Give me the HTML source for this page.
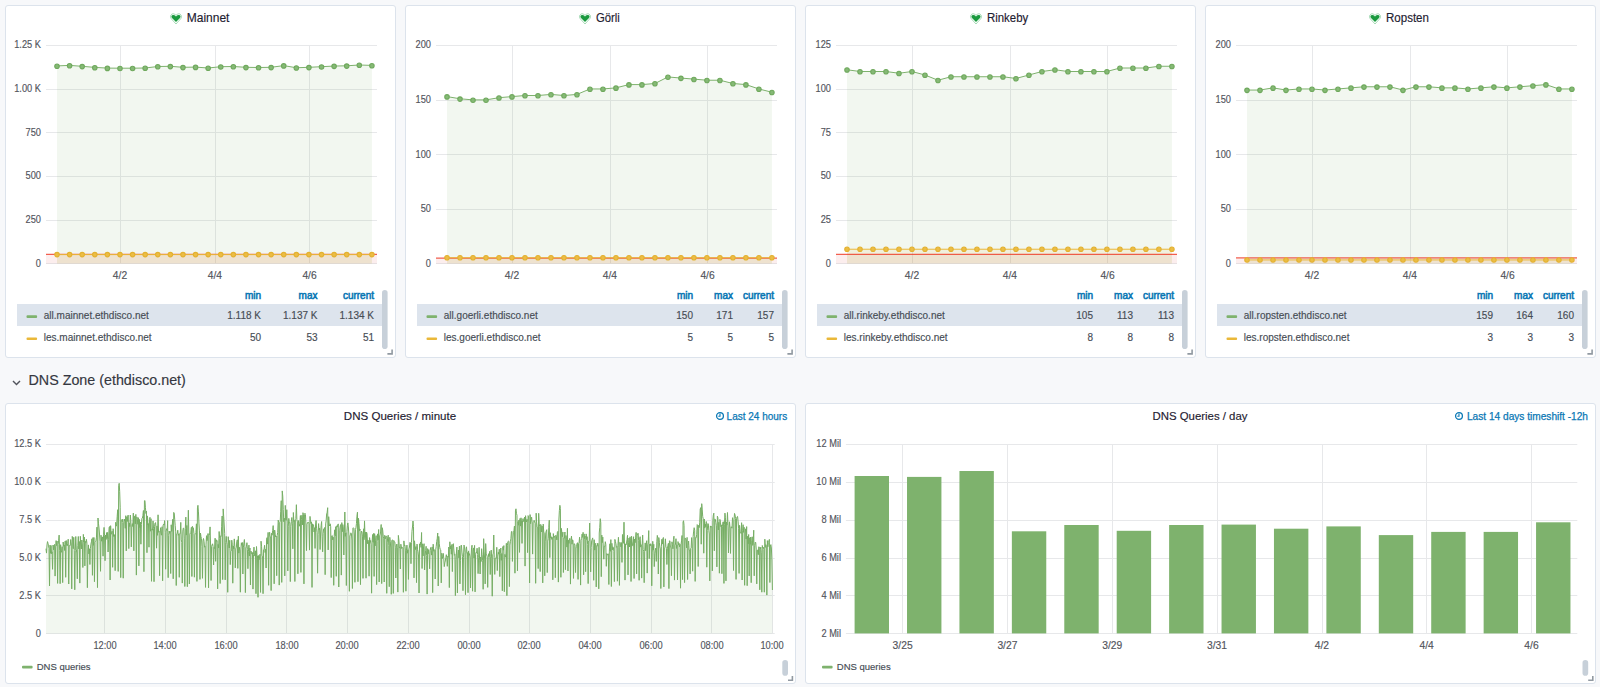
<!DOCTYPE html><html><head><meta charset="utf-8"><title>Grafana - ethdisco</title><style>
html,body{margin:0;padding:0;background:#f7f8fa;width:1600px;height:687px;overflow:hidden;font-family:"Liberation Sans", sans-serif;}
.abs{position:absolute;}
.t{position:absolute;white-space:nowrap;line-height:1;-webkit-text-stroke:0.15px currentColor;}
.panel{position:absolute;background:#fff;border:1px solid #dce3ec;border-radius:3px;box-sizing:border-box;}
svg{overflow:visible}

</style></head><body>
<div class="panel" style="left:5px;top:5px;width:391px;height:353px"></div>
<svg class="abs" style="left:168.75px;top:12.90px" width="14" height="12" viewBox="0 0 14 12">
<path d="M7 11.0 L2.3 5.8 C1.1 4.4 1.3 2.0 2.9 1.1 C4.3 0.4 5.8 1.0 7 2.3 C8.2 1.0 9.7 0.4 11.1 1.1 C12.7 2.0 12.9 4.4 11.7 5.8 Z" fill="none" stroke="rgba(40,165,80,0.45)" stroke-width="0.9"/>
<path d="M7 9.0 L3.0 5.0 C2.1 4.1 2.2 2.7 3.3 2.2 C4.4 1.7 5.8 2.1 7 3.4 C8.2 2.1 9.6 1.7 10.7 2.2 C11.8 2.7 11.9 4.1 11.0 5.0 Z" fill="#1a9a3e"/>
</svg>
<div class="t" style="left:186.75px;top:12.00px;font-size:12px;color:#1e2030;font-weight:normal;transform:scaleX(1.0);transform-origin:left center;">Mainnet</div>
<svg class="abs" style="left:0;top:0" width="1600" height="400">
<line x1="46" y1="45.50" x2="377" y2="45.50" stroke="#e7e8ea" stroke-width="1"/>
<line x1="46" y1="89.50" x2="377" y2="89.50" stroke="#e7e8ea" stroke-width="1"/>
<line x1="46" y1="132.50" x2="377" y2="132.50" stroke="#e7e8ea" stroke-width="1"/>
<line x1="46" y1="176.50" x2="377" y2="176.50" stroke="#e7e8ea" stroke-width="1"/>
<line x1="46" y1="220.50" x2="377" y2="220.50" stroke="#e7e8ea" stroke-width="1"/>
<line x1="46" y1="263.50" x2="377" y2="263.50" stroke="#e7e8ea" stroke-width="1"/>
<line x1="120.50" y1="45.3" x2="120.50" y2="263.6" stroke="#e7e8ea" stroke-width="1"/>
<line x1="215.50" y1="45.3" x2="215.50" y2="263.6" stroke="#e7e8ea" stroke-width="1"/>
<line x1="309.50" y1="45.3" x2="309.50" y2="263.6" stroke="#e7e8ea" stroke-width="1"/>
<rect x="46" y="254.30" width="331" height="9.30" fill="rgba(234,112,112,0.12)"/>
<polygon points="57.00,263.6 57.00,65.90 69.60,65.40 82.19,66.30 94.79,67.40 107.38,68.10 119.98,68.20 132.58,68.20 145.17,68.00 157.77,66.50 170.36,66.30 182.96,67.30 195.56,67.10 208.15,68.00 220.75,66.70 233.34,66.50 245.94,67.30 258.54,67.50 271.13,67.30 283.73,65.60 296.32,67.75 308.92,67.30 321.52,66.70 334.11,66.05 346.71,65.80 359.30,65.00 371.90,65.40 371.90,263.6" fill="rgba(126,178,109,0.1)"/>
<polygon points="57.00,263.6 57.00,254.60 371.90,254.60 371.90,263.6" fill="rgba(234,184,57,0.1)"/>
<line x1="46" y1="254.30" x2="377" y2="254.30" stroke="rgba(237,46,24,0.75)" stroke-width="1.2"/>
<polyline points="57.00,65.90 69.60,65.40 82.19,66.30 94.79,67.40 107.38,68.10 119.98,68.20 132.58,68.20 145.17,68.00 157.77,66.50 170.36,66.30 182.96,67.30 195.56,67.10 208.15,68.00 220.75,66.70 233.34,66.50 245.94,67.30 258.54,67.50 271.13,67.30 283.73,65.60 296.32,67.75 308.92,67.30 321.52,66.70 334.11,66.05 346.71,65.80 359.30,65.00 371.90,65.40" fill="none" stroke="#7eb26d" stroke-width="1"/>
<circle cx="57.00" cy="66.20" r="2.25" fill="#86b976" stroke="#6fa95d" stroke-width="1.1"/>
<circle cx="69.60" cy="65.70" r="2.25" fill="#86b976" stroke="#6fa95d" stroke-width="1.1"/>
<circle cx="82.19" cy="66.60" r="2.25" fill="#86b976" stroke="#6fa95d" stroke-width="1.1"/>
<circle cx="94.79" cy="67.70" r="2.25" fill="#86b976" stroke="#6fa95d" stroke-width="1.1"/>
<circle cx="107.38" cy="68.40" r="2.25" fill="#86b976" stroke="#6fa95d" stroke-width="1.1"/>
<circle cx="119.98" cy="68.50" r="2.25" fill="#86b976" stroke="#6fa95d" stroke-width="1.1"/>
<circle cx="132.58" cy="68.50" r="2.25" fill="#86b976" stroke="#6fa95d" stroke-width="1.1"/>
<circle cx="145.17" cy="68.30" r="2.25" fill="#86b976" stroke="#6fa95d" stroke-width="1.1"/>
<circle cx="157.77" cy="66.80" r="2.25" fill="#86b976" stroke="#6fa95d" stroke-width="1.1"/>
<circle cx="170.36" cy="66.60" r="2.25" fill="#86b976" stroke="#6fa95d" stroke-width="1.1"/>
<circle cx="182.96" cy="67.60" r="2.25" fill="#86b976" stroke="#6fa95d" stroke-width="1.1"/>
<circle cx="195.56" cy="67.40" r="2.25" fill="#86b976" stroke="#6fa95d" stroke-width="1.1"/>
<circle cx="208.15" cy="68.30" r="2.25" fill="#86b976" stroke="#6fa95d" stroke-width="1.1"/>
<circle cx="220.75" cy="67.00" r="2.25" fill="#86b976" stroke="#6fa95d" stroke-width="1.1"/>
<circle cx="233.34" cy="66.80" r="2.25" fill="#86b976" stroke="#6fa95d" stroke-width="1.1"/>
<circle cx="245.94" cy="67.60" r="2.25" fill="#86b976" stroke="#6fa95d" stroke-width="1.1"/>
<circle cx="258.54" cy="67.80" r="2.25" fill="#86b976" stroke="#6fa95d" stroke-width="1.1"/>
<circle cx="271.13" cy="67.60" r="2.25" fill="#86b976" stroke="#6fa95d" stroke-width="1.1"/>
<circle cx="283.73" cy="65.90" r="2.25" fill="#86b976" stroke="#6fa95d" stroke-width="1.1"/>
<circle cx="296.32" cy="68.05" r="2.25" fill="#86b976" stroke="#6fa95d" stroke-width="1.1"/>
<circle cx="308.92" cy="67.60" r="2.25" fill="#86b976" stroke="#6fa95d" stroke-width="1.1"/>
<circle cx="321.52" cy="67.00" r="2.25" fill="#86b976" stroke="#6fa95d" stroke-width="1.1"/>
<circle cx="334.11" cy="66.35" r="2.25" fill="#86b976" stroke="#6fa95d" stroke-width="1.1"/>
<circle cx="346.71" cy="66.10" r="2.25" fill="#86b976" stroke="#6fa95d" stroke-width="1.1"/>
<circle cx="359.30" cy="65.30" r="2.25" fill="#86b976" stroke="#6fa95d" stroke-width="1.1"/>
<circle cx="371.90" cy="65.70" r="2.25" fill="#86b976" stroke="#6fa95d" stroke-width="1.1"/>
<line x1="57.00" y1="254.60" x2="371.90" y2="254.60" stroke="#eab839" stroke-width="1"/>
<circle cx="57.00" cy="254.60" r="2.25" fill="#ecbd45" stroke="#e3b130" stroke-width="1.1"/>
<circle cx="69.60" cy="254.60" r="2.25" fill="#ecbd45" stroke="#e3b130" stroke-width="1.1"/>
<circle cx="82.19" cy="254.60" r="2.25" fill="#ecbd45" stroke="#e3b130" stroke-width="1.1"/>
<circle cx="94.79" cy="254.60" r="2.25" fill="#ecbd45" stroke="#e3b130" stroke-width="1.1"/>
<circle cx="107.38" cy="254.60" r="2.25" fill="#ecbd45" stroke="#e3b130" stroke-width="1.1"/>
<circle cx="119.98" cy="254.60" r="2.25" fill="#ecbd45" stroke="#e3b130" stroke-width="1.1"/>
<circle cx="132.58" cy="254.60" r="2.25" fill="#ecbd45" stroke="#e3b130" stroke-width="1.1"/>
<circle cx="145.17" cy="254.60" r="2.25" fill="#ecbd45" stroke="#e3b130" stroke-width="1.1"/>
<circle cx="157.77" cy="254.60" r="2.25" fill="#ecbd45" stroke="#e3b130" stroke-width="1.1"/>
<circle cx="170.36" cy="254.60" r="2.25" fill="#ecbd45" stroke="#e3b130" stroke-width="1.1"/>
<circle cx="182.96" cy="254.60" r="2.25" fill="#ecbd45" stroke="#e3b130" stroke-width="1.1"/>
<circle cx="195.56" cy="254.60" r="2.25" fill="#ecbd45" stroke="#e3b130" stroke-width="1.1"/>
<circle cx="208.15" cy="254.60" r="2.25" fill="#ecbd45" stroke="#e3b130" stroke-width="1.1"/>
<circle cx="220.75" cy="254.60" r="2.25" fill="#ecbd45" stroke="#e3b130" stroke-width="1.1"/>
<circle cx="233.34" cy="254.60" r="2.25" fill="#ecbd45" stroke="#e3b130" stroke-width="1.1"/>
<circle cx="245.94" cy="254.60" r="2.25" fill="#ecbd45" stroke="#e3b130" stroke-width="1.1"/>
<circle cx="258.54" cy="254.60" r="2.25" fill="#ecbd45" stroke="#e3b130" stroke-width="1.1"/>
<circle cx="271.13" cy="254.60" r="2.25" fill="#ecbd45" stroke="#e3b130" stroke-width="1.1"/>
<circle cx="283.73" cy="254.60" r="2.25" fill="#ecbd45" stroke="#e3b130" stroke-width="1.1"/>
<circle cx="296.32" cy="254.60" r="2.25" fill="#ecbd45" stroke="#e3b130" stroke-width="1.1"/>
<circle cx="308.92" cy="254.60" r="2.25" fill="#ecbd45" stroke="#e3b130" stroke-width="1.1"/>
<circle cx="321.52" cy="254.60" r="2.25" fill="#ecbd45" stroke="#e3b130" stroke-width="1.1"/>
<circle cx="334.11" cy="254.60" r="2.25" fill="#ecbd45" stroke="#e3b130" stroke-width="1.1"/>
<circle cx="346.71" cy="254.60" r="2.25" fill="#ecbd45" stroke="#e3b130" stroke-width="1.1"/>
<circle cx="359.30" cy="254.60" r="2.25" fill="#ecbd45" stroke="#e3b130" stroke-width="1.1"/>
<circle cx="371.90" cy="254.60" r="2.25" fill="#ecbd45" stroke="#e3b130" stroke-width="1.1"/>
<rect x="17" y="304" width="365" height="22" fill="#dde4ed"/>
<rect x="382" y="290" width="5.6" height="59" rx="2.8" fill="#c7d0d9"/>
<path d="M387.4 353.9 H392.1 V349.6" fill="none" stroke="#9199a1" stroke-width="1.6"/>
<rect x="26.5" y="315.2" width="10.6" height="2.7" rx="1" fill="#7eb26d"/>
<rect x="26.5" y="337.4" width="10.6" height="2.7" rx="1" fill="#eab839"/>
</svg>
<div class="t" style="left:-959.00px;width:1000px;text-align:right;top:40.00px;font-size:10.3px;color:#52545c;font-weight:normal;transform:scaleX(0.9);transform-origin:right center;">1.25 K</div>
<div class="t" style="left:-959.00px;width:1000px;text-align:right;top:84.00px;font-size:10.3px;color:#52545c;font-weight:normal;transform:scaleX(0.9);transform-origin:right center;">1.00 K</div>
<div class="t" style="left:-959.00px;width:1000px;text-align:right;top:128.00px;font-size:10.3px;color:#52545c;font-weight:normal;transform:scaleX(0.9);transform-origin:right center;">750</div>
<div class="t" style="left:-959.00px;width:1000px;text-align:right;top:171.00px;font-size:10.3px;color:#52545c;font-weight:normal;transform:scaleX(0.9);transform-origin:right center;">500</div>
<div class="t" style="left:-959.00px;width:1000px;text-align:right;top:215.00px;font-size:10.3px;color:#52545c;font-weight:normal;transform:scaleX(0.9);transform-origin:right center;">250</div>
<div class="t" style="left:-959.00px;width:1000px;text-align:right;top:259.00px;font-size:10.3px;color:#52545c;font-weight:normal;transform:scaleX(0.9);transform-origin:right center;">0</div>
<div class="t" style="left:-380.02px;width:1000px;text-align:center;top:271.00px;font-size:10.3px;color:#52545c;font-weight:normal;">4/2</div>
<div class="t" style="left:-285.17px;width:1000px;text-align:center;top:271.00px;font-size:10.3px;color:#52545c;font-weight:normal;">4/4</div>
<div class="t" style="left:-190.45px;width:1000px;text-align:center;top:271.00px;font-size:10.3px;color:#52545c;font-weight:normal;">4/6</div>
<div class="t" style="left:-739.00px;width:1000px;text-align:right;top:291.00px;font-size:10px;color:#0a78b5;font-weight:normal;-webkit-text-stroke:0.55px #0a78b5;">min</div>
<div class="t" style="left:-682.50px;width:1000px;text-align:right;top:291.00px;font-size:10px;color:#0a78b5;font-weight:normal;-webkit-text-stroke:0.55px #0a78b5;">max</div>
<div class="t" style="left:-626.00px;width:1000px;text-align:right;top:291.00px;font-size:10px;color:#0a78b5;font-weight:normal;-webkit-text-stroke:0.55px #0a78b5;">current</div>
<div class="t" style="left:43.80px;top:311.00px;font-size:10px;color:#464c54;font-weight:normal;">all.mainnet.ethdisco.net</div>
<div class="t" style="left:-739.00px;width:1000px;text-align:right;top:311.00px;font-size:10px;color:#464c54;font-weight:normal;">1.118 K</div>
<div class="t" style="left:-682.50px;width:1000px;text-align:right;top:311.00px;font-size:10px;color:#464c54;font-weight:normal;">1.137 K</div>
<div class="t" style="left:-626.00px;width:1000px;text-align:right;top:311.00px;font-size:10px;color:#464c54;font-weight:normal;">1.134 K</div>
<div class="t" style="left:43.80px;top:333.00px;font-size:10px;color:#464c54;font-weight:normal;">les.mainnet.ethdisco.net</div>
<div class="t" style="left:-739.00px;width:1000px;text-align:right;top:333.00px;font-size:10px;color:#464c54;font-weight:normal;">50</div>
<div class="t" style="left:-682.50px;width:1000px;text-align:right;top:333.00px;font-size:10px;color:#464c54;font-weight:normal;">53</div>
<div class="t" style="left:-626.00px;width:1000px;text-align:right;top:333.00px;font-size:10px;color:#464c54;font-weight:normal;">51</div>
<div class="panel" style="left:405px;top:5px;width:391px;height:353px"></div>
<svg class="abs" style="left:577.90px;top:12.90px" width="14" height="12" viewBox="0 0 14 12">
<path d="M7 11.0 L2.3 5.8 C1.1 4.4 1.3 2.0 2.9 1.1 C4.3 0.4 5.8 1.0 7 2.3 C8.2 1.0 9.7 0.4 11.1 1.1 C12.7 2.0 12.9 4.4 11.7 5.8 Z" fill="none" stroke="rgba(40,165,80,0.45)" stroke-width="0.9"/>
<path d="M7 9.0 L3.0 5.0 C2.1 4.1 2.2 2.7 3.3 2.2 C4.4 1.7 5.8 2.1 7 3.4 C8.2 2.1 9.6 1.7 10.7 2.2 C11.8 2.7 11.9 4.1 11.0 5.0 Z" fill="#1a9a3e"/>
</svg>
<div class="t" style="left:595.90px;top:12.00px;font-size:12px;color:#1e2030;font-weight:normal;transform:scaleX(0.94);transform-origin:left center;">G&ouml;rli</div>
<svg class="abs" style="left:0;top:0" width="1600" height="400">
<line x1="436" y1="45.50" x2="777" y2="45.50" stroke="#e7e8ea" stroke-width="1"/>
<line x1="436" y1="100.50" x2="777" y2="100.50" stroke="#e7e8ea" stroke-width="1"/>
<line x1="436" y1="154.50" x2="777" y2="154.50" stroke="#e7e8ea" stroke-width="1"/>
<line x1="436" y1="209.50" x2="777" y2="209.50" stroke="#e7e8ea" stroke-width="1"/>
<line x1="436" y1="263.50" x2="777" y2="263.50" stroke="#e7e8ea" stroke-width="1"/>
<line x1="512.50" y1="45.3" x2="512.50" y2="263.6" stroke="#e7e8ea" stroke-width="1"/>
<line x1="610.50" y1="45.3" x2="610.50" y2="263.6" stroke="#e7e8ea" stroke-width="1"/>
<line x1="707.50" y1="45.3" x2="707.50" y2="263.6" stroke="#e7e8ea" stroke-width="1"/>
<rect x="436" y="258.10" width="341" height="5.50" fill="rgba(234,112,112,0.12)"/>
<polygon points="447.00,263.6 447.00,96.60 460.00,98.78 472.99,99.88 485.99,99.88 498.98,97.69 511.98,96.60 524.98,95.51 537.97,95.51 550.97,94.42 563.96,95.51 576.96,94.42 589.96,88.96 602.95,88.96 615.95,87.87 628.94,84.59 641.94,84.59 654.94,83.50 667.93,76.95 680.93,78.05 693.92,79.14 706.92,80.23 719.92,80.23 732.91,83.50 745.91,84.59 758.90,88.96 771.90,92.23 771.90,263.6" fill="rgba(126,178,109,0.1)"/>
<polygon points="447.00,263.6 447.00,257.74 771.90,257.74 771.90,263.6" fill="rgba(234,184,57,0.1)"/>
<line x1="436" y1="258.10" x2="777" y2="258.10" stroke="rgba(237,46,24,0.75)" stroke-width="1.2"/>
<polyline points="447.00,96.60 460.00,98.78 472.99,99.88 485.99,99.88 498.98,97.69 511.98,96.60 524.98,95.51 537.97,95.51 550.97,94.42 563.96,95.51 576.96,94.42 589.96,88.96 602.95,88.96 615.95,87.87 628.94,84.59 641.94,84.59 654.94,83.50 667.93,76.95 680.93,78.05 693.92,79.14 706.92,80.23 719.92,80.23 732.91,83.50 745.91,84.59 758.90,88.96 771.90,92.23" fill="none" stroke="#7eb26d" stroke-width="1"/>
<circle cx="447.00" cy="96.90" r="2.25" fill="#86b976" stroke="#6fa95d" stroke-width="1.1"/>
<circle cx="460.00" cy="99.08" r="2.25" fill="#86b976" stroke="#6fa95d" stroke-width="1.1"/>
<circle cx="472.99" cy="100.18" r="2.25" fill="#86b976" stroke="#6fa95d" stroke-width="1.1"/>
<circle cx="485.99" cy="100.18" r="2.25" fill="#86b976" stroke="#6fa95d" stroke-width="1.1"/>
<circle cx="498.98" cy="97.99" r="2.25" fill="#86b976" stroke="#6fa95d" stroke-width="1.1"/>
<circle cx="511.98" cy="96.90" r="2.25" fill="#86b976" stroke="#6fa95d" stroke-width="1.1"/>
<circle cx="524.98" cy="95.81" r="2.25" fill="#86b976" stroke="#6fa95d" stroke-width="1.1"/>
<circle cx="537.97" cy="95.81" r="2.25" fill="#86b976" stroke="#6fa95d" stroke-width="1.1"/>
<circle cx="550.97" cy="94.72" r="2.25" fill="#86b976" stroke="#6fa95d" stroke-width="1.1"/>
<circle cx="563.96" cy="95.81" r="2.25" fill="#86b976" stroke="#6fa95d" stroke-width="1.1"/>
<circle cx="576.96" cy="94.72" r="2.25" fill="#86b976" stroke="#6fa95d" stroke-width="1.1"/>
<circle cx="589.96" cy="89.26" r="2.25" fill="#86b976" stroke="#6fa95d" stroke-width="1.1"/>
<circle cx="602.95" cy="89.26" r="2.25" fill="#86b976" stroke="#6fa95d" stroke-width="1.1"/>
<circle cx="615.95" cy="88.17" r="2.25" fill="#86b976" stroke="#6fa95d" stroke-width="1.1"/>
<circle cx="628.94" cy="84.89" r="2.25" fill="#86b976" stroke="#6fa95d" stroke-width="1.1"/>
<circle cx="641.94" cy="84.89" r="2.25" fill="#86b976" stroke="#6fa95d" stroke-width="1.1"/>
<circle cx="654.94" cy="83.80" r="2.25" fill="#86b976" stroke="#6fa95d" stroke-width="1.1"/>
<circle cx="667.93" cy="77.25" r="2.25" fill="#86b976" stroke="#6fa95d" stroke-width="1.1"/>
<circle cx="680.93" cy="78.35" r="2.25" fill="#86b976" stroke="#6fa95d" stroke-width="1.1"/>
<circle cx="693.92" cy="79.44" r="2.25" fill="#86b976" stroke="#6fa95d" stroke-width="1.1"/>
<circle cx="706.92" cy="80.53" r="2.25" fill="#86b976" stroke="#6fa95d" stroke-width="1.1"/>
<circle cx="719.92" cy="80.53" r="2.25" fill="#86b976" stroke="#6fa95d" stroke-width="1.1"/>
<circle cx="732.91" cy="83.80" r="2.25" fill="#86b976" stroke="#6fa95d" stroke-width="1.1"/>
<circle cx="745.91" cy="84.89" r="2.25" fill="#86b976" stroke="#6fa95d" stroke-width="1.1"/>
<circle cx="758.90" cy="89.26" r="2.25" fill="#86b976" stroke="#6fa95d" stroke-width="1.1"/>
<circle cx="771.90" cy="92.53" r="2.25" fill="#86b976" stroke="#6fa95d" stroke-width="1.1"/>
<line x1="447.00" y1="257.74" x2="771.90" y2="257.74" stroke="#eab839" stroke-width="1"/>
<circle cx="447.00" cy="257.74" r="2.25" fill="#ecbd45" stroke="#e3b130" stroke-width="1.1"/>
<circle cx="460.00" cy="257.74" r="2.25" fill="#ecbd45" stroke="#e3b130" stroke-width="1.1"/>
<circle cx="472.99" cy="257.74" r="2.25" fill="#ecbd45" stroke="#e3b130" stroke-width="1.1"/>
<circle cx="485.99" cy="257.74" r="2.25" fill="#ecbd45" stroke="#e3b130" stroke-width="1.1"/>
<circle cx="498.98" cy="257.74" r="2.25" fill="#ecbd45" stroke="#e3b130" stroke-width="1.1"/>
<circle cx="511.98" cy="257.74" r="2.25" fill="#ecbd45" stroke="#e3b130" stroke-width="1.1"/>
<circle cx="524.98" cy="257.74" r="2.25" fill="#ecbd45" stroke="#e3b130" stroke-width="1.1"/>
<circle cx="537.97" cy="257.74" r="2.25" fill="#ecbd45" stroke="#e3b130" stroke-width="1.1"/>
<circle cx="550.97" cy="257.74" r="2.25" fill="#ecbd45" stroke="#e3b130" stroke-width="1.1"/>
<circle cx="563.96" cy="257.74" r="2.25" fill="#ecbd45" stroke="#e3b130" stroke-width="1.1"/>
<circle cx="576.96" cy="257.74" r="2.25" fill="#ecbd45" stroke="#e3b130" stroke-width="1.1"/>
<circle cx="589.96" cy="257.74" r="2.25" fill="#ecbd45" stroke="#e3b130" stroke-width="1.1"/>
<circle cx="602.95" cy="257.74" r="2.25" fill="#ecbd45" stroke="#e3b130" stroke-width="1.1"/>
<circle cx="615.95" cy="257.74" r="2.25" fill="#ecbd45" stroke="#e3b130" stroke-width="1.1"/>
<circle cx="628.94" cy="257.74" r="2.25" fill="#ecbd45" stroke="#e3b130" stroke-width="1.1"/>
<circle cx="641.94" cy="257.74" r="2.25" fill="#ecbd45" stroke="#e3b130" stroke-width="1.1"/>
<circle cx="654.94" cy="257.74" r="2.25" fill="#ecbd45" stroke="#e3b130" stroke-width="1.1"/>
<circle cx="667.93" cy="257.74" r="2.25" fill="#ecbd45" stroke="#e3b130" stroke-width="1.1"/>
<circle cx="680.93" cy="257.74" r="2.25" fill="#ecbd45" stroke="#e3b130" stroke-width="1.1"/>
<circle cx="693.92" cy="257.74" r="2.25" fill="#ecbd45" stroke="#e3b130" stroke-width="1.1"/>
<circle cx="706.92" cy="257.74" r="2.25" fill="#ecbd45" stroke="#e3b130" stroke-width="1.1"/>
<circle cx="719.92" cy="257.74" r="2.25" fill="#ecbd45" stroke="#e3b130" stroke-width="1.1"/>
<circle cx="732.91" cy="257.74" r="2.25" fill="#ecbd45" stroke="#e3b130" stroke-width="1.1"/>
<circle cx="745.91" cy="257.74" r="2.25" fill="#ecbd45" stroke="#e3b130" stroke-width="1.1"/>
<circle cx="758.90" cy="257.74" r="2.25" fill="#ecbd45" stroke="#e3b130" stroke-width="1.1"/>
<circle cx="771.90" cy="257.74" r="2.25" fill="#ecbd45" stroke="#e3b130" stroke-width="1.1"/>
<rect x="417" y="304" width="365" height="22" fill="#dde4ed"/>
<rect x="782" y="290" width="5.6" height="59" rx="2.8" fill="#c7d0d9"/>
<path d="M787.4 353.9 H792.1 V349.6" fill="none" stroke="#9199a1" stroke-width="1.6"/>
<rect x="426.5" y="315.2" width="10.6" height="2.7" rx="1" fill="#7eb26d"/>
<rect x="426.5" y="337.4" width="10.6" height="2.7" rx="1" fill="#eab839"/>
</svg>
<div class="t" style="left:-569.00px;width:1000px;text-align:right;top:40.00px;font-size:10.3px;color:#52545c;font-weight:normal;transform:scaleX(0.9);transform-origin:right center;">200</div>
<div class="t" style="left:-569.00px;width:1000px;text-align:right;top:95.00px;font-size:10.3px;color:#52545c;font-weight:normal;transform:scaleX(0.9);transform-origin:right center;">150</div>
<div class="t" style="left:-569.00px;width:1000px;text-align:right;top:150.00px;font-size:10.3px;color:#52545c;font-weight:normal;transform:scaleX(0.9);transform-origin:right center;">100</div>
<div class="t" style="left:-569.00px;width:1000px;text-align:right;top:204.00px;font-size:10.3px;color:#52545c;font-weight:normal;transform:scaleX(0.9);transform-origin:right center;">50</div>
<div class="t" style="left:-569.00px;width:1000px;text-align:right;top:259.00px;font-size:10.3px;color:#52545c;font-weight:normal;transform:scaleX(0.9);transform-origin:right center;">0</div>
<div class="t" style="left:11.98px;width:1000px;text-align:center;top:271.00px;font-size:10.3px;color:#52545c;font-weight:normal;">4/2</div>
<div class="t" style="left:109.84px;width:1000px;text-align:center;top:271.00px;font-size:10.3px;color:#52545c;font-weight:normal;">4/4</div>
<div class="t" style="left:207.57px;width:1000px;text-align:center;top:271.00px;font-size:10.3px;color:#52545c;font-weight:normal;">4/6</div>
<div class="t" style="left:-307.00px;width:1000px;text-align:right;top:291.00px;font-size:10px;color:#0a78b5;font-weight:normal;-webkit-text-stroke:0.55px #0a78b5;">min</div>
<div class="t" style="left:-267.00px;width:1000px;text-align:right;top:291.00px;font-size:10px;color:#0a78b5;font-weight:normal;-webkit-text-stroke:0.55px #0a78b5;">max</div>
<div class="t" style="left:-226.00px;width:1000px;text-align:right;top:291.00px;font-size:10px;color:#0a78b5;font-weight:normal;-webkit-text-stroke:0.55px #0a78b5;">current</div>
<div class="t" style="left:443.80px;top:311.00px;font-size:10px;color:#464c54;font-weight:normal;">all.goerli.ethdisco.net</div>
<div class="t" style="left:-307.00px;width:1000px;text-align:right;top:311.00px;font-size:10px;color:#464c54;font-weight:normal;">150</div>
<div class="t" style="left:-267.00px;width:1000px;text-align:right;top:311.00px;font-size:10px;color:#464c54;font-weight:normal;">171</div>
<div class="t" style="left:-226.00px;width:1000px;text-align:right;top:311.00px;font-size:10px;color:#464c54;font-weight:normal;">157</div>
<div class="t" style="left:443.80px;top:333.00px;font-size:10px;color:#464c54;font-weight:normal;">les.goerli.ethdisco.net</div>
<div class="t" style="left:-307.00px;width:1000px;text-align:right;top:333.00px;font-size:10px;color:#464c54;font-weight:normal;">5</div>
<div class="t" style="left:-267.00px;width:1000px;text-align:right;top:333.00px;font-size:10px;color:#464c54;font-weight:normal;">5</div>
<div class="t" style="left:-226.00px;width:1000px;text-align:right;top:333.00px;font-size:10px;color:#464c54;font-weight:normal;">5</div>
<div class="panel" style="left:805px;top:5px;width:391px;height:353px"></div>
<svg class="abs" style="left:969.05px;top:12.90px" width="14" height="12" viewBox="0 0 14 12">
<path d="M7 11.0 L2.3 5.8 C1.1 4.4 1.3 2.0 2.9 1.1 C4.3 0.4 5.8 1.0 7 2.3 C8.2 1.0 9.7 0.4 11.1 1.1 C12.7 2.0 12.9 4.4 11.7 5.8 Z" fill="none" stroke="rgba(40,165,80,0.45)" stroke-width="0.9"/>
<path d="M7 9.0 L3.0 5.0 C2.1 4.1 2.2 2.7 3.3 2.2 C4.4 1.7 5.8 2.1 7 3.4 C8.2 2.1 9.6 1.7 10.7 2.2 C11.8 2.7 11.9 4.1 11.0 5.0 Z" fill="#1a9a3e"/>
</svg>
<div class="t" style="left:987.05px;top:12.00px;font-size:12px;color:#1e2030;font-weight:normal;transform:scaleX(0.95);transform-origin:left center;">Rinkeby</div>
<svg class="abs" style="left:0;top:0" width="1600" height="400">
<line x1="836" y1="45.50" x2="1177" y2="45.50" stroke="#e7e8ea" stroke-width="1"/>
<line x1="836" y1="89.50" x2="1177" y2="89.50" stroke="#e7e8ea" stroke-width="1"/>
<line x1="836" y1="132.50" x2="1177" y2="132.50" stroke="#e7e8ea" stroke-width="1"/>
<line x1="836" y1="176.50" x2="1177" y2="176.50" stroke="#e7e8ea" stroke-width="1"/>
<line x1="836" y1="220.50" x2="1177" y2="220.50" stroke="#e7e8ea" stroke-width="1"/>
<line x1="836" y1="263.50" x2="1177" y2="263.50" stroke="#e7e8ea" stroke-width="1"/>
<line x1="912.50" y1="45.3" x2="912.50" y2="263.6" stroke="#e7e8ea" stroke-width="1"/>
<line x1="1010.50" y1="45.3" x2="1010.50" y2="263.6" stroke="#e7e8ea" stroke-width="1"/>
<line x1="1107.50" y1="45.3" x2="1107.50" y2="263.6" stroke="#e7e8ea" stroke-width="1"/>
<rect x="836" y="254.30" width="341" height="9.30" fill="rgba(234,112,112,0.12)"/>
<polygon points="847.00,263.6 847.00,69.75 860.00,71.50 872.99,71.50 885.99,71.50 898.98,73.24 911.98,71.50 924.98,74.99 937.97,80.23 950.97,76.74 963.96,76.74 976.96,76.74 989.96,76.74 1002.95,76.74 1015.95,78.48 1028.94,74.99 1041.94,71.50 1054.94,69.75 1067.93,71.50 1080.93,71.50 1093.92,71.50 1106.92,71.50 1119.92,68.00 1132.91,68.00 1145.91,68.00 1158.90,66.26 1171.90,66.26 1171.90,263.6" fill="rgba(126,178,109,0.1)"/>
<polygon points="847.00,263.6 847.00,249.23 1171.90,249.23 1171.90,263.6" fill="rgba(234,184,57,0.1)"/>
<line x1="836" y1="254.30" x2="1177" y2="254.30" stroke="rgba(237,46,24,0.75)" stroke-width="1.2"/>
<polyline points="847.00,69.75 860.00,71.50 872.99,71.50 885.99,71.50 898.98,73.24 911.98,71.50 924.98,74.99 937.97,80.23 950.97,76.74 963.96,76.74 976.96,76.74 989.96,76.74 1002.95,76.74 1015.95,78.48 1028.94,74.99 1041.94,71.50 1054.94,69.75 1067.93,71.50 1080.93,71.50 1093.92,71.50 1106.92,71.50 1119.92,68.00 1132.91,68.00 1145.91,68.00 1158.90,66.26 1171.90,66.26" fill="none" stroke="#7eb26d" stroke-width="1"/>
<circle cx="847.00" cy="70.05" r="2.25" fill="#86b976" stroke="#6fa95d" stroke-width="1.1"/>
<circle cx="860.00" cy="71.80" r="2.25" fill="#86b976" stroke="#6fa95d" stroke-width="1.1"/>
<circle cx="872.99" cy="71.80" r="2.25" fill="#86b976" stroke="#6fa95d" stroke-width="1.1"/>
<circle cx="885.99" cy="71.80" r="2.25" fill="#86b976" stroke="#6fa95d" stroke-width="1.1"/>
<circle cx="898.98" cy="73.54" r="2.25" fill="#86b976" stroke="#6fa95d" stroke-width="1.1"/>
<circle cx="911.98" cy="71.80" r="2.25" fill="#86b976" stroke="#6fa95d" stroke-width="1.1"/>
<circle cx="924.98" cy="75.29" r="2.25" fill="#86b976" stroke="#6fa95d" stroke-width="1.1"/>
<circle cx="937.97" cy="80.53" r="2.25" fill="#86b976" stroke="#6fa95d" stroke-width="1.1"/>
<circle cx="950.97" cy="77.04" r="2.25" fill="#86b976" stroke="#6fa95d" stroke-width="1.1"/>
<circle cx="963.96" cy="77.04" r="2.25" fill="#86b976" stroke="#6fa95d" stroke-width="1.1"/>
<circle cx="976.96" cy="77.04" r="2.25" fill="#86b976" stroke="#6fa95d" stroke-width="1.1"/>
<circle cx="989.96" cy="77.04" r="2.25" fill="#86b976" stroke="#6fa95d" stroke-width="1.1"/>
<circle cx="1002.95" cy="77.04" r="2.25" fill="#86b976" stroke="#6fa95d" stroke-width="1.1"/>
<circle cx="1015.95" cy="78.78" r="2.25" fill="#86b976" stroke="#6fa95d" stroke-width="1.1"/>
<circle cx="1028.94" cy="75.29" r="2.25" fill="#86b976" stroke="#6fa95d" stroke-width="1.1"/>
<circle cx="1041.94" cy="71.80" r="2.25" fill="#86b976" stroke="#6fa95d" stroke-width="1.1"/>
<circle cx="1054.94" cy="70.05" r="2.25" fill="#86b976" stroke="#6fa95d" stroke-width="1.1"/>
<circle cx="1067.93" cy="71.80" r="2.25" fill="#86b976" stroke="#6fa95d" stroke-width="1.1"/>
<circle cx="1080.93" cy="71.80" r="2.25" fill="#86b976" stroke="#6fa95d" stroke-width="1.1"/>
<circle cx="1093.92" cy="71.80" r="2.25" fill="#86b976" stroke="#6fa95d" stroke-width="1.1"/>
<circle cx="1106.92" cy="71.80" r="2.25" fill="#86b976" stroke="#6fa95d" stroke-width="1.1"/>
<circle cx="1119.92" cy="68.30" r="2.25" fill="#86b976" stroke="#6fa95d" stroke-width="1.1"/>
<circle cx="1132.91" cy="68.30" r="2.25" fill="#86b976" stroke="#6fa95d" stroke-width="1.1"/>
<circle cx="1145.91" cy="68.30" r="2.25" fill="#86b976" stroke="#6fa95d" stroke-width="1.1"/>
<circle cx="1158.90" cy="66.56" r="2.25" fill="#86b976" stroke="#6fa95d" stroke-width="1.1"/>
<circle cx="1171.90" cy="66.56" r="2.25" fill="#86b976" stroke="#6fa95d" stroke-width="1.1"/>
<line x1="847.00" y1="249.23" x2="1171.90" y2="249.23" stroke="#eab839" stroke-width="1"/>
<circle cx="847.00" cy="249.23" r="2.25" fill="#ecbd45" stroke="#e3b130" stroke-width="1.1"/>
<circle cx="860.00" cy="249.23" r="2.25" fill="#ecbd45" stroke="#e3b130" stroke-width="1.1"/>
<circle cx="872.99" cy="249.23" r="2.25" fill="#ecbd45" stroke="#e3b130" stroke-width="1.1"/>
<circle cx="885.99" cy="249.23" r="2.25" fill="#ecbd45" stroke="#e3b130" stroke-width="1.1"/>
<circle cx="898.98" cy="249.23" r="2.25" fill="#ecbd45" stroke="#e3b130" stroke-width="1.1"/>
<circle cx="911.98" cy="249.23" r="2.25" fill="#ecbd45" stroke="#e3b130" stroke-width="1.1"/>
<circle cx="924.98" cy="249.23" r="2.25" fill="#ecbd45" stroke="#e3b130" stroke-width="1.1"/>
<circle cx="937.97" cy="249.23" r="2.25" fill="#ecbd45" stroke="#e3b130" stroke-width="1.1"/>
<circle cx="950.97" cy="249.23" r="2.25" fill="#ecbd45" stroke="#e3b130" stroke-width="1.1"/>
<circle cx="963.96" cy="249.23" r="2.25" fill="#ecbd45" stroke="#e3b130" stroke-width="1.1"/>
<circle cx="976.96" cy="249.23" r="2.25" fill="#ecbd45" stroke="#e3b130" stroke-width="1.1"/>
<circle cx="989.96" cy="249.23" r="2.25" fill="#ecbd45" stroke="#e3b130" stroke-width="1.1"/>
<circle cx="1002.95" cy="249.23" r="2.25" fill="#ecbd45" stroke="#e3b130" stroke-width="1.1"/>
<circle cx="1015.95" cy="249.23" r="2.25" fill="#ecbd45" stroke="#e3b130" stroke-width="1.1"/>
<circle cx="1028.94" cy="249.23" r="2.25" fill="#ecbd45" stroke="#e3b130" stroke-width="1.1"/>
<circle cx="1041.94" cy="249.23" r="2.25" fill="#ecbd45" stroke="#e3b130" stroke-width="1.1"/>
<circle cx="1054.94" cy="249.23" r="2.25" fill="#ecbd45" stroke="#e3b130" stroke-width="1.1"/>
<circle cx="1067.93" cy="249.23" r="2.25" fill="#ecbd45" stroke="#e3b130" stroke-width="1.1"/>
<circle cx="1080.93" cy="249.23" r="2.25" fill="#ecbd45" stroke="#e3b130" stroke-width="1.1"/>
<circle cx="1093.92" cy="249.23" r="2.25" fill="#ecbd45" stroke="#e3b130" stroke-width="1.1"/>
<circle cx="1106.92" cy="249.23" r="2.25" fill="#ecbd45" stroke="#e3b130" stroke-width="1.1"/>
<circle cx="1119.92" cy="249.23" r="2.25" fill="#ecbd45" stroke="#e3b130" stroke-width="1.1"/>
<circle cx="1132.91" cy="249.23" r="2.25" fill="#ecbd45" stroke="#e3b130" stroke-width="1.1"/>
<circle cx="1145.91" cy="249.23" r="2.25" fill="#ecbd45" stroke="#e3b130" stroke-width="1.1"/>
<circle cx="1158.90" cy="249.23" r="2.25" fill="#ecbd45" stroke="#e3b130" stroke-width="1.1"/>
<circle cx="1171.90" cy="249.23" r="2.25" fill="#ecbd45" stroke="#e3b130" stroke-width="1.1"/>
<rect x="817" y="304" width="365" height="22" fill="#dde4ed"/>
<rect x="1182" y="290" width="5.6" height="59" rx="2.8" fill="#c7d0d9"/>
<path d="M1187.4 353.9 H1192.1 V349.6" fill="none" stroke="#9199a1" stroke-width="1.6"/>
<rect x="826.5" y="315.2" width="10.6" height="2.7" rx="1" fill="#7eb26d"/>
<rect x="826.5" y="337.4" width="10.6" height="2.7" rx="1" fill="#eab839"/>
</svg>
<div class="t" style="left:-169.00px;width:1000px;text-align:right;top:40.00px;font-size:10.3px;color:#52545c;font-weight:normal;transform:scaleX(0.9);transform-origin:right center;">125</div>
<div class="t" style="left:-169.00px;width:1000px;text-align:right;top:84.00px;font-size:10.3px;color:#52545c;font-weight:normal;transform:scaleX(0.9);transform-origin:right center;">100</div>
<div class="t" style="left:-169.00px;width:1000px;text-align:right;top:128.00px;font-size:10.3px;color:#52545c;font-weight:normal;transform:scaleX(0.9);transform-origin:right center;">75</div>
<div class="t" style="left:-169.00px;width:1000px;text-align:right;top:171.00px;font-size:10.3px;color:#52545c;font-weight:normal;transform:scaleX(0.9);transform-origin:right center;">50</div>
<div class="t" style="left:-169.00px;width:1000px;text-align:right;top:215.00px;font-size:10.3px;color:#52545c;font-weight:normal;transform:scaleX(0.9);transform-origin:right center;">25</div>
<div class="t" style="left:-169.00px;width:1000px;text-align:right;top:259.00px;font-size:10.3px;color:#52545c;font-weight:normal;transform:scaleX(0.9);transform-origin:right center;">0</div>
<div class="t" style="left:411.98px;width:1000px;text-align:center;top:271.00px;font-size:10.3px;color:#52545c;font-weight:normal;">4/2</div>
<div class="t" style="left:509.84px;width:1000px;text-align:center;top:271.00px;font-size:10.3px;color:#52545c;font-weight:normal;">4/4</div>
<div class="t" style="left:607.57px;width:1000px;text-align:center;top:271.00px;font-size:10.3px;color:#52545c;font-weight:normal;">4/6</div>
<div class="t" style="left:93.00px;width:1000px;text-align:right;top:291.00px;font-size:10px;color:#0a78b5;font-weight:normal;-webkit-text-stroke:0.55px #0a78b5;">min</div>
<div class="t" style="left:133.00px;width:1000px;text-align:right;top:291.00px;font-size:10px;color:#0a78b5;font-weight:normal;-webkit-text-stroke:0.55px #0a78b5;">max</div>
<div class="t" style="left:174.00px;width:1000px;text-align:right;top:291.00px;font-size:10px;color:#0a78b5;font-weight:normal;-webkit-text-stroke:0.55px #0a78b5;">current</div>
<div class="t" style="left:843.80px;top:311.00px;font-size:10px;color:#464c54;font-weight:normal;">all.rinkeby.ethdisco.net</div>
<div class="t" style="left:93.00px;width:1000px;text-align:right;top:311.00px;font-size:10px;color:#464c54;font-weight:normal;">105</div>
<div class="t" style="left:133.00px;width:1000px;text-align:right;top:311.00px;font-size:10px;color:#464c54;font-weight:normal;">113</div>
<div class="t" style="left:174.00px;width:1000px;text-align:right;top:311.00px;font-size:10px;color:#464c54;font-weight:normal;">113</div>
<div class="t" style="left:843.80px;top:333.00px;font-size:10px;color:#464c54;font-weight:normal;">les.rinkeby.ethdisco.net</div>
<div class="t" style="left:93.00px;width:1000px;text-align:right;top:333.00px;font-size:10px;color:#464c54;font-weight:normal;">8</div>
<div class="t" style="left:133.00px;width:1000px;text-align:right;top:333.00px;font-size:10px;color:#464c54;font-weight:normal;">8</div>
<div class="t" style="left:174.00px;width:1000px;text-align:right;top:333.00px;font-size:10px;color:#464c54;font-weight:normal;">8</div>
<div class="panel" style="left:1205px;top:5px;width:391px;height:353px"></div>
<svg class="abs" style="left:1368.30px;top:12.90px" width="14" height="12" viewBox="0 0 14 12">
<path d="M7 11.0 L2.3 5.8 C1.1 4.4 1.3 2.0 2.9 1.1 C4.3 0.4 5.8 1.0 7 2.3 C8.2 1.0 9.7 0.4 11.1 1.1 C12.7 2.0 12.9 4.4 11.7 5.8 Z" fill="none" stroke="rgba(40,165,80,0.45)" stroke-width="0.9"/>
<path d="M7 9.0 L3.0 5.0 C2.1 4.1 2.2 2.7 3.3 2.2 C4.4 1.7 5.8 2.1 7 3.4 C8.2 2.1 9.6 1.7 10.7 2.2 C11.8 2.7 11.9 4.1 11.0 5.0 Z" fill="#1a9a3e"/>
</svg>
<div class="t" style="left:1386.30px;top:12.00px;font-size:12px;color:#1e2030;font-weight:normal;transform:scaleX(0.96);transform-origin:left center;">Ropsten</div>
<svg class="abs" style="left:0;top:0" width="1600" height="400">
<line x1="1236" y1="45.50" x2="1577" y2="45.50" stroke="#e7e8ea" stroke-width="1"/>
<line x1="1236" y1="100.50" x2="1577" y2="100.50" stroke="#e7e8ea" stroke-width="1"/>
<line x1="1236" y1="154.50" x2="1577" y2="154.50" stroke="#e7e8ea" stroke-width="1"/>
<line x1="1236" y1="209.50" x2="1577" y2="209.50" stroke="#e7e8ea" stroke-width="1"/>
<line x1="1236" y1="263.50" x2="1577" y2="263.50" stroke="#e7e8ea" stroke-width="1"/>
<line x1="1312.50" y1="45.3" x2="1312.50" y2="263.6" stroke="#e7e8ea" stroke-width="1"/>
<line x1="1410.50" y1="45.3" x2="1410.50" y2="263.6" stroke="#e7e8ea" stroke-width="1"/>
<line x1="1507.50" y1="45.3" x2="1507.50" y2="263.6" stroke="#e7e8ea" stroke-width="1"/>
<rect x="1236" y="257.90" width="341" height="5.70" fill="rgba(234,112,112,0.12)"/>
<polygon points="1247.00,263.6 1247.00,90.05 1260.00,90.05 1272.99,87.87 1285.99,90.05 1298.98,88.96 1311.98,88.96 1324.98,90.05 1337.97,88.96 1350.97,87.87 1363.96,86.78 1376.96,86.78 1389.96,86.78 1402.95,90.05 1415.95,86.78 1428.94,86.78 1441.94,87.87 1454.94,87.87 1467.93,88.96 1480.93,87.87 1493.92,86.78 1506.92,87.87 1519.92,86.78 1532.91,85.69 1545.91,84.59 1558.90,88.96 1571.90,88.96 1571.90,263.6" fill="rgba(126,178,109,0.1)"/>
<polygon points="1247.00,263.6 1247.00,259.93 1571.90,259.93 1571.90,263.6" fill="rgba(234,184,57,0.1)"/>
<line x1="1236" y1="257.90" x2="1577" y2="257.90" stroke="rgba(237,46,24,0.75)" stroke-width="1.2"/>
<polyline points="1247.00,90.05 1260.00,90.05 1272.99,87.87 1285.99,90.05 1298.98,88.96 1311.98,88.96 1324.98,90.05 1337.97,88.96 1350.97,87.87 1363.96,86.78 1376.96,86.78 1389.96,86.78 1402.95,90.05 1415.95,86.78 1428.94,86.78 1441.94,87.87 1454.94,87.87 1467.93,88.96 1480.93,87.87 1493.92,86.78 1506.92,87.87 1519.92,86.78 1532.91,85.69 1545.91,84.59 1558.90,88.96 1571.90,88.96" fill="none" stroke="#7eb26d" stroke-width="1"/>
<circle cx="1247.00" cy="90.35" r="2.25" fill="#86b976" stroke="#6fa95d" stroke-width="1.1"/>
<circle cx="1260.00" cy="90.35" r="2.25" fill="#86b976" stroke="#6fa95d" stroke-width="1.1"/>
<circle cx="1272.99" cy="88.17" r="2.25" fill="#86b976" stroke="#6fa95d" stroke-width="1.1"/>
<circle cx="1285.99" cy="90.35" r="2.25" fill="#86b976" stroke="#6fa95d" stroke-width="1.1"/>
<circle cx="1298.98" cy="89.26" r="2.25" fill="#86b976" stroke="#6fa95d" stroke-width="1.1"/>
<circle cx="1311.98" cy="89.26" r="2.25" fill="#86b976" stroke="#6fa95d" stroke-width="1.1"/>
<circle cx="1324.98" cy="90.35" r="2.25" fill="#86b976" stroke="#6fa95d" stroke-width="1.1"/>
<circle cx="1337.97" cy="89.26" r="2.25" fill="#86b976" stroke="#6fa95d" stroke-width="1.1"/>
<circle cx="1350.97" cy="88.17" r="2.25" fill="#86b976" stroke="#6fa95d" stroke-width="1.1"/>
<circle cx="1363.96" cy="87.08" r="2.25" fill="#86b976" stroke="#6fa95d" stroke-width="1.1"/>
<circle cx="1376.96" cy="87.08" r="2.25" fill="#86b976" stroke="#6fa95d" stroke-width="1.1"/>
<circle cx="1389.96" cy="87.08" r="2.25" fill="#86b976" stroke="#6fa95d" stroke-width="1.1"/>
<circle cx="1402.95" cy="90.35" r="2.25" fill="#86b976" stroke="#6fa95d" stroke-width="1.1"/>
<circle cx="1415.95" cy="87.08" r="2.25" fill="#86b976" stroke="#6fa95d" stroke-width="1.1"/>
<circle cx="1428.94" cy="87.08" r="2.25" fill="#86b976" stroke="#6fa95d" stroke-width="1.1"/>
<circle cx="1441.94" cy="88.17" r="2.25" fill="#86b976" stroke="#6fa95d" stroke-width="1.1"/>
<circle cx="1454.94" cy="88.17" r="2.25" fill="#86b976" stroke="#6fa95d" stroke-width="1.1"/>
<circle cx="1467.93" cy="89.26" r="2.25" fill="#86b976" stroke="#6fa95d" stroke-width="1.1"/>
<circle cx="1480.93" cy="88.17" r="2.25" fill="#86b976" stroke="#6fa95d" stroke-width="1.1"/>
<circle cx="1493.92" cy="87.08" r="2.25" fill="#86b976" stroke="#6fa95d" stroke-width="1.1"/>
<circle cx="1506.92" cy="88.17" r="2.25" fill="#86b976" stroke="#6fa95d" stroke-width="1.1"/>
<circle cx="1519.92" cy="87.08" r="2.25" fill="#86b976" stroke="#6fa95d" stroke-width="1.1"/>
<circle cx="1532.91" cy="85.99" r="2.25" fill="#86b976" stroke="#6fa95d" stroke-width="1.1"/>
<circle cx="1545.91" cy="84.89" r="2.25" fill="#86b976" stroke="#6fa95d" stroke-width="1.1"/>
<circle cx="1558.90" cy="89.26" r="2.25" fill="#86b976" stroke="#6fa95d" stroke-width="1.1"/>
<circle cx="1571.90" cy="89.26" r="2.25" fill="#86b976" stroke="#6fa95d" stroke-width="1.1"/>
<line x1="1247.00" y1="259.93" x2="1571.90" y2="259.93" stroke="#eab839" stroke-width="1"/>
<circle cx="1247.00" cy="259.93" r="2.25" fill="#ecbd45" stroke="#e3b130" stroke-width="1.1"/>
<circle cx="1260.00" cy="259.93" r="2.25" fill="#ecbd45" stroke="#e3b130" stroke-width="1.1"/>
<circle cx="1272.99" cy="259.93" r="2.25" fill="#ecbd45" stroke="#e3b130" stroke-width="1.1"/>
<circle cx="1285.99" cy="259.93" r="2.25" fill="#ecbd45" stroke="#e3b130" stroke-width="1.1"/>
<circle cx="1298.98" cy="259.93" r="2.25" fill="#ecbd45" stroke="#e3b130" stroke-width="1.1"/>
<circle cx="1311.98" cy="259.93" r="2.25" fill="#ecbd45" stroke="#e3b130" stroke-width="1.1"/>
<circle cx="1324.98" cy="259.93" r="2.25" fill="#ecbd45" stroke="#e3b130" stroke-width="1.1"/>
<circle cx="1337.97" cy="259.93" r="2.25" fill="#ecbd45" stroke="#e3b130" stroke-width="1.1"/>
<circle cx="1350.97" cy="259.93" r="2.25" fill="#ecbd45" stroke="#e3b130" stroke-width="1.1"/>
<circle cx="1363.96" cy="259.93" r="2.25" fill="#ecbd45" stroke="#e3b130" stroke-width="1.1"/>
<circle cx="1376.96" cy="259.93" r="2.25" fill="#ecbd45" stroke="#e3b130" stroke-width="1.1"/>
<circle cx="1389.96" cy="259.93" r="2.25" fill="#ecbd45" stroke="#e3b130" stroke-width="1.1"/>
<circle cx="1402.95" cy="259.93" r="2.25" fill="#ecbd45" stroke="#e3b130" stroke-width="1.1"/>
<circle cx="1415.95" cy="259.93" r="2.25" fill="#ecbd45" stroke="#e3b130" stroke-width="1.1"/>
<circle cx="1428.94" cy="259.93" r="2.25" fill="#ecbd45" stroke="#e3b130" stroke-width="1.1"/>
<circle cx="1441.94" cy="259.93" r="2.25" fill="#ecbd45" stroke="#e3b130" stroke-width="1.1"/>
<circle cx="1454.94" cy="259.93" r="2.25" fill="#ecbd45" stroke="#e3b130" stroke-width="1.1"/>
<circle cx="1467.93" cy="259.93" r="2.25" fill="#ecbd45" stroke="#e3b130" stroke-width="1.1"/>
<circle cx="1480.93" cy="259.93" r="2.25" fill="#ecbd45" stroke="#e3b130" stroke-width="1.1"/>
<circle cx="1493.92" cy="259.93" r="2.25" fill="#ecbd45" stroke="#e3b130" stroke-width="1.1"/>
<circle cx="1506.92" cy="259.93" r="2.25" fill="#ecbd45" stroke="#e3b130" stroke-width="1.1"/>
<circle cx="1519.92" cy="259.93" r="2.25" fill="#ecbd45" stroke="#e3b130" stroke-width="1.1"/>
<circle cx="1532.91" cy="259.93" r="2.25" fill="#ecbd45" stroke="#e3b130" stroke-width="1.1"/>
<circle cx="1545.91" cy="259.93" r="2.25" fill="#ecbd45" stroke="#e3b130" stroke-width="1.1"/>
<circle cx="1558.90" cy="259.93" r="2.25" fill="#ecbd45" stroke="#e3b130" stroke-width="1.1"/>
<circle cx="1571.90" cy="259.93" r="2.25" fill="#ecbd45" stroke="#e3b130" stroke-width="1.1"/>
<rect x="1217" y="304" width="365" height="22" fill="#dde4ed"/>
<rect x="1582" y="290" width="5.6" height="59" rx="2.8" fill="#c7d0d9"/>
<path d="M1587.4 353.9 H1592.1 V349.6" fill="none" stroke="#9199a1" stroke-width="1.6"/>
<rect x="1226.5" y="315.2" width="10.6" height="2.7" rx="1" fill="#7eb26d"/>
<rect x="1226.5" y="337.4" width="10.6" height="2.7" rx="1" fill="#eab839"/>
</svg>
<div class="t" style="left:231.00px;width:1000px;text-align:right;top:40.00px;font-size:10.3px;color:#52545c;font-weight:normal;transform:scaleX(0.9);transform-origin:right center;">200</div>
<div class="t" style="left:231.00px;width:1000px;text-align:right;top:95.00px;font-size:10.3px;color:#52545c;font-weight:normal;transform:scaleX(0.9);transform-origin:right center;">150</div>
<div class="t" style="left:231.00px;width:1000px;text-align:right;top:150.00px;font-size:10.3px;color:#52545c;font-weight:normal;transform:scaleX(0.9);transform-origin:right center;">100</div>
<div class="t" style="left:231.00px;width:1000px;text-align:right;top:204.00px;font-size:10.3px;color:#52545c;font-weight:normal;transform:scaleX(0.9);transform-origin:right center;">50</div>
<div class="t" style="left:231.00px;width:1000px;text-align:right;top:259.00px;font-size:10.3px;color:#52545c;font-weight:normal;transform:scaleX(0.9);transform-origin:right center;">0</div>
<div class="t" style="left:811.98px;width:1000px;text-align:center;top:271.00px;font-size:10.3px;color:#52545c;font-weight:normal;">4/2</div>
<div class="t" style="left:909.84px;width:1000px;text-align:center;top:271.00px;font-size:10.3px;color:#52545c;font-weight:normal;">4/4</div>
<div class="t" style="left:1007.57px;width:1000px;text-align:center;top:271.00px;font-size:10.3px;color:#52545c;font-weight:normal;">4/6</div>
<div class="t" style="left:493.00px;width:1000px;text-align:right;top:291.00px;font-size:10px;color:#0a78b5;font-weight:normal;-webkit-text-stroke:0.55px #0a78b5;">min</div>
<div class="t" style="left:533.00px;width:1000px;text-align:right;top:291.00px;font-size:10px;color:#0a78b5;font-weight:normal;-webkit-text-stroke:0.55px #0a78b5;">max</div>
<div class="t" style="left:574.00px;width:1000px;text-align:right;top:291.00px;font-size:10px;color:#0a78b5;font-weight:normal;-webkit-text-stroke:0.55px #0a78b5;">current</div>
<div class="t" style="left:1243.80px;top:311.00px;font-size:10px;color:#464c54;font-weight:normal;">all.ropsten.ethdisco.net</div>
<div class="t" style="left:493.00px;width:1000px;text-align:right;top:311.00px;font-size:10px;color:#464c54;font-weight:normal;">159</div>
<div class="t" style="left:533.00px;width:1000px;text-align:right;top:311.00px;font-size:10px;color:#464c54;font-weight:normal;">164</div>
<div class="t" style="left:574.00px;width:1000px;text-align:right;top:311.00px;font-size:10px;color:#464c54;font-weight:normal;">160</div>
<div class="t" style="left:1243.80px;top:333.00px;font-size:10px;color:#464c54;font-weight:normal;">les.ropsten.ethdisco.net</div>
<div class="t" style="left:493.00px;width:1000px;text-align:right;top:333.00px;font-size:10px;color:#464c54;font-weight:normal;">3</div>
<div class="t" style="left:533.00px;width:1000px;text-align:right;top:333.00px;font-size:10px;color:#464c54;font-weight:normal;">3</div>
<div class="t" style="left:574.00px;width:1000px;text-align:right;top:333.00px;font-size:10px;color:#464c54;font-weight:normal;">3</div>
<svg class="abs" style="left:11px;top:378px" width="12" height="10" viewBox="0 0 12 10"><path d="M2 3 L5.5 6.6 L9 3" fill="none" stroke="#52545c" stroke-width="1.4"/></svg>
<div class="t" style="left:28.50px;top:373.00px;font-size:14.3px;color:#343740;font-weight:normal;">DNS Zone (ethdisco.net)</div>
<div class="panel" style="left:5px;top:403px;width:791px;height:281px"></div>
<div class="panel" style="left:805px;top:403px;width:791px;height:281px"></div>
<div class="t" style="left:-100.00px;width:1000px;text-align:center;top:411.00px;font-size:11.55px;color:#1e2030;font-weight:normal;">DNS Queries / minute</div>
<svg class="abs" style="left:713.80px;top:410.20px" width="12" height="12" viewBox="0 0 12 12">
<circle cx="6" cy="6" r="3.40" fill="none" stroke="#0a78b5" stroke-width="1.3"/>
<path d="M6 3.6 V6.3 H4.3" fill="none" stroke="#0a78b5" stroke-width="1.1"/>
</svg>
<div class="t" style="left:-212.80px;width:1000px;text-align:right;top:412.00px;font-size:10px;color:#0a78b5;font-weight:normal;-webkit-text-stroke:0.25px #0a78b5;">Last 24 hours</div>
<svg class="abs" style="left:0;top:0" width="1600" height="687">
<line x1="46.0" y1="444.50" x2="774.7" y2="444.50" stroke="#e7e8ea" stroke-width="1"/>
<line x1="46.0" y1="482.50" x2="774.7" y2="482.50" stroke="#e7e8ea" stroke-width="1"/>
<line x1="46.0" y1="520.50" x2="774.7" y2="520.50" stroke="#e7e8ea" stroke-width="1"/>
<line x1="46.0" y1="558.50" x2="774.7" y2="558.50" stroke="#e7e8ea" stroke-width="1"/>
<line x1="46.0" y1="595.50" x2="774.7" y2="595.50" stroke="#e7e8ea" stroke-width="1"/>
<line x1="46.0" y1="633.50" x2="774.7" y2="633.50" stroke="#e7e8ea" stroke-width="1"/>
<line x1="104.50" y1="444.3" x2="104.50" y2="633.4" stroke="#e7e8ea" stroke-width="1"/>
<line x1="165.50" y1="444.3" x2="165.50" y2="633.4" stroke="#e7e8ea" stroke-width="1"/>
<line x1="226.50" y1="444.3" x2="226.50" y2="633.4" stroke="#e7e8ea" stroke-width="1"/>
<line x1="286.50" y1="444.3" x2="286.50" y2="633.4" stroke="#e7e8ea" stroke-width="1"/>
<line x1="347.50" y1="444.3" x2="347.50" y2="633.4" stroke="#e7e8ea" stroke-width="1"/>
<line x1="408.50" y1="444.3" x2="408.50" y2="633.4" stroke="#e7e8ea" stroke-width="1"/>
<line x1="469.50" y1="444.3" x2="469.50" y2="633.4" stroke="#e7e8ea" stroke-width="1"/>
<line x1="529.50" y1="444.3" x2="529.50" y2="633.4" stroke="#e7e8ea" stroke-width="1"/>
<line x1="590.50" y1="444.3" x2="590.50" y2="633.4" stroke="#e7e8ea" stroke-width="1"/>
<line x1="651.50" y1="444.3" x2="651.50" y2="633.4" stroke="#e7e8ea" stroke-width="1"/>
<line x1="711.50" y1="444.3" x2="711.50" y2="633.4" stroke="#e7e8ea" stroke-width="1"/>
<line x1="772.50" y1="444.3" x2="772.50" y2="633.4" stroke="#e7e8ea" stroke-width="1"/>
<polygon points="46.0,633.4 46.00,548.7 46.50,553.1 47.01,544.9 47.51,541.6 48.02,543.3 48.52,545.9 49.03,548.6 49.53,585.9 50.04,545.1 50.54,553.3 51.05,545.5 51.55,553.7 52.06,551.9 52.56,569.3 53.07,545.0 53.57,549.8 54.08,545.6 54.58,544.4 55.09,576.1 55.59,548.0 56.10,540.6 56.60,545.6 57.11,541.1 57.61,583.4 58.12,544.5 58.62,540.9 59.12,535.1 59.63,550.8 60.13,583.7 60.64,544.7 61.14,550.8 61.65,552.3 62.15,546.7 62.66,582.6 63.16,542.0 63.67,546.2 64.17,545.0 64.68,550.5 65.18,541.1 65.69,577.3 66.19,540.5 66.70,545.1 67.20,545.9 67.71,543.4 68.21,539.2 68.72,584.0 69.22,545.5 69.73,545.6 70.23,545.5 70.73,539.5 71.24,544.0 71.74,588.9 72.25,536.4 72.75,539.9 73.26,548.7 73.76,537.3 74.27,550.6 74.77,589.8 75.28,550.5 75.78,536.5 76.29,549.1 76.79,553.0 77.30,578.8 77.80,545.7 78.31,536.5 78.81,548.9 79.32,541.5 79.82,583.1 80.33,536.3 80.83,545.0 81.34,549.0 81.84,540.0 82.35,545.0 82.85,567.5 83.35,534.4 83.86,542.0 84.36,537.1 84.87,565.9 85.37,541.4 85.88,542.7 86.38,539.3 86.89,542.8 87.39,587.7 87.90,551.1 88.40,544.9 88.91,553.9 89.41,548.8 89.92,564.5 90.42,548.4 90.93,544.1 91.43,541.8 91.94,538.8 92.44,575.3 92.95,537.6 93.45,545.3 93.96,537.5 94.46,581.7 94.97,542.3 95.47,541.5 95.97,540.4 96.48,537.2 96.98,527.1 97.49,587.6 97.99,518.0 98.50,523.8 99.00,528.0 99.51,534.0 100.01,541.3 100.52,571.3 101.02,535.2 101.53,541.2 102.03,537.9 102.54,536.9 103.04,556.2 103.55,534.2 104.05,527.4 104.56,535.5 105.06,560.7 105.57,535.0 106.07,539.5 106.58,532.6 107.08,538.4 107.58,532.4 108.09,552.0 108.59,539.8 109.10,527.6 109.60,526.5 110.11,580.0 110.61,525.7 111.12,534.3 111.62,533.3 112.13,531.2 112.63,567.3 113.14,528.7 113.64,536.3 114.15,536.5 114.65,534.6 115.16,570.7 115.66,522.3 116.17,526.2 116.67,525.1 117.18,516.5 117.68,509.7 118.19,571.4 118.69,485.4 119.20,483.3 119.70,491.7 120.20,507.2 120.71,577.6 121.21,520.7 121.72,521.1 122.22,519.0 122.73,522.6 123.23,578.2 123.74,522.8 124.24,519.0 124.75,521.3 125.25,528.3 125.76,515.7 126.26,550.9 126.77,516.8 127.27,521.5 127.78,515.6 128.28,515.1 128.79,548.6 129.29,523.0 129.80,526.6 130.30,515.0 130.81,520.5 131.31,546.9 131.82,526.2 132.32,523.6 132.82,526.6 133.33,513.1 133.83,550.8 134.34,518.9 134.84,515.9 135.35,523.8 135.85,514.4 136.36,575.1 136.86,516.9 137.37,519.3 137.87,524.3 138.38,517.7 138.88,565.9 139.39,519.4 139.89,527.6 140.40,522.0 140.90,544.2 141.41,524.3 141.91,518.3 142.42,518.0 142.92,515.5 143.43,510.5 143.93,571.7 144.44,500.8 144.94,500.5 145.44,507.8 145.95,513.5 146.45,511.1 146.96,552.7 147.46,515.9 147.97,524.9 148.47,523.6 148.98,547.2 149.48,519.4 149.99,517.3 150.49,531.2 151.00,518.7 151.50,581.3 152.01,528.9 152.51,530.2 153.02,520.9 153.52,528.7 154.03,581.7 154.53,526.3 155.04,523.1 155.54,522.6 156.05,527.0 156.55,548.2 157.05,526.0 157.56,535.3 158.06,514.8 158.57,532.3 159.07,531.2 159.58,575.7 160.08,533.2 160.59,527.7 161.09,534.0 161.60,535.2 162.10,526.7 162.61,580.8 163.11,525.0 163.62,524.2 164.12,525.1 164.63,520.6 165.13,532.4 165.64,569.2 166.14,530.7 166.65,528.7 167.15,530.8 167.66,520.6 168.16,577.7 168.67,535.5 169.17,531.0 169.67,533.3 170.18,531.3 170.68,573.5 171.19,524.8 171.69,531.4 172.20,525.8 172.70,519.3 173.21,578.8 173.71,512.4 174.22,513.2 174.72,519.6 175.23,525.7 175.73,531.9 176.24,585.5 176.74,533.8 177.25,533.6 177.75,530.2 178.26,535.3 178.76,533.9 179.27,577.3 179.77,533.5 180.28,533.7 180.78,522.4 181.29,539.9 181.79,542.4 182.29,583.1 182.80,531.1 183.30,528.0 183.81,528.3 184.31,538.9 184.82,586.5 185.32,528.3 185.83,517.1 186.33,535.1 186.84,525.5 187.34,586.7 187.85,531.0 188.35,510.2 188.86,535.1 189.36,584.0 189.87,534.6 190.37,533.1 190.88,532.4 191.38,527.3 191.89,576.5 192.39,526.3 192.90,528.0 193.40,528.0 193.90,533.4 194.41,577.2 194.91,535.1 195.42,533.1 195.92,532.5 196.43,523.8 196.93,581.4 197.44,507.9 197.94,505.3 198.45,511.9 198.95,523.1 199.46,530.9 199.96,579.4 200.47,533.0 200.97,536.6 201.48,538.6 201.98,546.7 202.49,578.3 202.99,540.7 203.50,538.5 204.00,541.3 204.51,547.2 205.01,546.3 205.52,587.4 206.02,544.9 206.52,535.7 207.03,540.7 207.53,538.0 208.04,533.5 208.54,587.8 209.05,534.3 209.55,534.9 210.06,526.9 210.56,544.0 211.07,580.5 211.57,546.3 212.08,545.0 212.58,543.8 213.09,546.3 213.59,565.0 214.10,547.6 214.60,548.5 215.11,538.2 215.61,561.3 216.12,539.7 216.62,541.3 217.13,540.7 217.63,588.9 218.14,544.4 218.64,548.0 219.14,531.5 219.65,538.4 220.15,583.5 220.66,535.8 221.16,536.3 221.67,526.6 222.17,516.0 222.68,579.6 223.18,508.9 223.69,516.5 224.19,525.0 224.70,533.3 225.20,579.9 225.71,542.6 226.21,536.4 226.72,542.3 227.22,544.6 227.73,592.3 228.23,536.7 228.74,544.0 229.24,548.0 229.75,540.3 230.25,564.6 230.75,551.5 231.26,551.0 231.76,540.2 232.27,544.2 232.77,583.2 233.28,546.0 233.78,548.8 234.29,538.9 234.79,546.6 235.30,567.9 235.80,548.8 236.31,547.6 236.81,541.6 237.32,539.8 237.82,568.4 238.33,536.2 238.83,553.1 239.34,547.2 239.84,551.1 240.35,592.2 240.85,549.9 241.36,542.8 241.86,545.3 242.37,542.5 242.87,574.0 243.37,547.9 243.88,542.9 244.38,539.5 244.89,546.8 245.39,592.6 245.90,548.1 246.40,546.7 246.91,542.7 247.41,549.4 247.92,568.7 248.42,551.3 248.93,545.1 249.43,555.9 249.94,548.0 250.44,584.9 250.95,551.1 251.45,552.4 251.96,554.1 252.46,552.5 252.97,589.1 253.47,554.6 253.98,547.1 254.48,555.7 254.99,556.0 255.49,550.8 255.99,593.7 256.50,546.5 257.00,555.8 257.51,555.9 258.01,597.3 258.52,555.5 259.02,559.8 259.53,556.9 260.03,554.2 260.54,592.4 261.04,541.2 261.55,546.3 262.05,555.8 262.56,556.2 263.06,593.7 263.57,549.7 264.07,549.4 264.58,545.3 265.08,552.5 265.59,549.3 266.09,568.0 266.60,539.1 267.10,537.6 267.61,544.1 268.11,532.4 268.61,585.3 269.12,536.9 269.62,532.2 270.13,536.9 270.63,536.9 271.14,590.6 271.64,533.2 272.15,535.2 272.65,530.7 273.16,525.6 273.66,535.0 274.17,583.8 274.67,530.1 275.18,534.3 275.68,537.0 276.19,536.1 276.69,575.7 277.20,535.5 277.70,532.4 278.21,520.1 278.71,522.6 279.22,585.1 279.72,522.3 280.22,521.2 280.73,511.3 281.23,500.7 281.74,582.4 282.24,490.9 282.75,496.2 283.25,509.4 283.76,521.7 284.26,518.2 284.77,575.9 285.27,505.4 285.78,519.7 286.28,520.3 286.79,509.7 287.29,523.9 287.80,570.9 288.30,526.2 288.81,518.4 289.31,523.0 289.82,522.6 290.32,581.6 290.83,526.4 291.33,521.5 291.84,517.5 292.34,523.8 292.84,548.8 293.35,512.5 293.85,521.4 294.36,520.4 294.86,581.5 295.37,519.6 295.87,518.6 296.38,504.7 296.88,519.7 297.39,521.9 297.89,573.8 298.40,520.5 298.90,523.2 299.41,526.2 299.91,523.3 300.42,515.5 300.92,572.4 301.43,519.5 301.93,515.2 302.44,524.9 302.94,512.7 303.45,514.4 303.95,583.9 304.46,514.6 304.96,513.2 305.46,514.6 305.97,526.0 306.47,550.6 306.98,524.2 307.48,522.9 307.99,522.0 308.49,522.3 309.00,523.8 309.50,550.1 310.01,516.4 310.51,521.7 311.02,523.6 311.52,521.8 312.03,587.4 312.53,523.8 313.04,524.4 313.54,524.9 314.05,532.0 314.55,527.7 315.06,548.4 315.56,525.0 316.07,520.5 316.57,528.2 317.07,532.7 317.58,573.2 318.08,534.7 318.59,523.6 319.09,530.0 319.60,528.2 320.10,549.5 320.61,533.0 321.11,525.6 321.62,521.5 322.12,536.2 322.63,551.8 323.13,533.8 323.64,529.0 324.14,529.2 324.65,527.5 325.15,574.7 325.66,523.9 326.16,520.7 326.67,513.7 327.17,512.3 327.68,507.7 328.18,549.9 328.69,516.7 329.19,524.7 329.69,526.0 330.20,523.8 330.70,526.8 331.21,577.6 331.71,535.9 332.22,535.5 332.72,539.9 333.23,537.2 333.73,585.3 334.24,535.4 334.74,529.8 335.25,536.0 335.75,526.7 336.26,576.3 336.76,525.8 337.27,527.1 337.77,524.9 338.28,523.9 338.78,587.0 339.29,530.2 339.79,529.3 340.30,525.8 340.80,524.5 341.31,575.1 341.81,522.6 342.31,531.7 342.82,524.6 343.32,528.0 343.83,555.0 344.33,532.9 344.84,512.0 345.34,536.3 345.85,533.0 346.35,585.5 346.86,531.6 347.36,525.7 347.87,522.9 348.37,526.9 348.88,535.0 349.38,591.3 349.89,536.1 350.39,534.8 350.90,532.8 351.40,533.6 351.91,540.0 352.41,588.5 352.92,528.1 353.42,527.8 353.92,528.4 354.43,535.0 354.93,582.3 355.44,529.6 355.94,527.8 356.45,523.7 356.95,516.2 357.46,512.2 357.96,581.7 358.47,518.3 358.97,523.6 359.48,530.7 359.98,529.0 360.49,584.6 360.99,534.0 361.50,531.1 362.00,531.9 362.51,536.9 363.01,578.4 363.52,528.8 364.02,539.7 364.53,520.9 365.03,537.4 365.54,532.2 366.04,578.2 366.54,532.1 367.05,533.8 367.55,543.7 368.06,540.1 368.56,543.0 369.07,576.2 369.57,537.6 370.08,542.4 370.58,540.5 371.09,544.8 371.59,593.2 372.10,542.5 372.60,534.5 373.11,542.4 373.61,533.4 374.12,576.4 374.62,533.7 375.13,545.9 375.63,540.3 376.14,535.6 376.64,584.6 377.15,541.5 377.65,533.9 378.16,539.9 378.66,529.5 379.16,582.0 379.67,535.9 380.17,534.4 380.68,531.1 381.18,524.5 381.69,583.6 382.19,527.7 382.70,530.1 383.20,536.2 383.71,538.8 384.21,582.0 384.72,535.3 385.22,538.8 385.73,537.3 386.23,535.9 386.74,593.3 387.24,542.9 387.75,536.6 388.25,535.2 388.76,545.3 389.26,586.7 389.77,537.3 390.27,541.6 390.77,548.0 391.28,594.3 391.78,540.4 392.29,540.0 392.79,540.0 393.30,593.4 393.80,540.5 394.31,541.6 394.81,542.0 395.32,547.2 395.82,578.0 396.33,546.9 396.83,544.0 397.34,547.7 397.84,592.1 398.35,535.4 398.85,540.0 399.36,547.7 399.86,547.0 400.37,569.0 400.87,544.2 401.38,548.5 401.88,546.9 402.39,547.6 402.89,548.0 403.39,592.3 403.90,540.9 404.40,545.9 404.91,545.2 405.41,550.1 405.92,591.2 406.42,550.9 406.93,545.1 407.43,553.2 407.94,549.8 408.44,579.4 408.95,549.0 409.45,547.0 409.96,542.3 410.46,542.9 410.97,563.7 411.47,542.5 411.98,531.3 412.48,527.0 412.99,521.0 413.49,526.5 414.00,577.9 414.50,540.8 415.01,546.6 415.51,549.5 416.01,546.5 416.52,582.6 417.02,544.1 417.53,549.4 418.03,551.5 418.54,556.0 419.04,593.0 419.55,543.9 420.05,545.0 420.56,542.1 421.06,547.4 421.57,532.5 422.07,568.5 422.58,543.8 423.08,555.9 423.59,546.9 424.09,543.7 424.60,570.0 425.10,556.3 425.61,550.7 426.11,546.3 426.62,555.5 427.12,594.1 427.63,548.6 428.13,553.8 428.63,549.7 429.14,554.9 429.64,568.8 430.15,550.4 430.65,547.5 431.16,550.5 431.66,555.1 432.17,546.9 432.67,592.6 433.18,544.2 433.68,551.2 434.19,549.6 434.69,550.3 435.20,579.0 435.70,549.8 436.21,546.6 436.71,541.5 437.22,538.5 437.72,533.0 438.23,586.0 438.73,536.4 439.24,543.7 439.74,547.4 440.24,549.4 440.75,549.9 441.25,582.9 441.76,553.2 442.26,558.6 442.77,556.3 443.27,553.4 443.78,558.4 444.28,566.6 444.79,562.9 445.29,561.0 445.80,557.8 446.30,554.7 446.81,557.6 447.31,566.3 447.82,556.2 448.32,557.2 448.83,547.0 449.33,587.6 449.84,541.8 450.34,549.0 450.85,545.9 451.35,554.2 451.86,544.5 452.36,571.6 452.86,544.2 453.37,543.7 453.87,550.0 454.38,555.3 454.88,554.4 455.39,595.6 455.89,559.3 456.40,553.0 456.90,547.1 457.41,592.9 457.91,555.4 458.42,550.0 458.92,557.9 459.43,546.2 459.93,583.9 460.44,560.8 460.94,545.7 461.45,545.1 461.95,552.1 462.46,556.5 462.96,590.7 463.47,557.3 463.97,545.1 464.48,546.3 464.98,552.3 465.48,594.7 465.99,549.4 466.49,546.8 467.00,553.2 467.50,552.6 468.01,592.7 468.51,550.9 469.02,555.1 469.52,553.7 470.03,556.9 470.53,587.9 471.04,558.0 471.54,547.7 472.05,545.2 472.55,591.2 473.06,551.3 473.56,547.9 474.07,558.0 474.57,545.4 475.08,591.9 475.58,554.3 476.09,552.5 476.59,553.0 477.09,548.2 477.60,554.4 478.10,573.6 478.61,557.4 479.11,547.3 479.62,560.1 480.12,574.0 480.63,557.0 481.13,561.5 481.64,548.7 482.14,554.8 482.65,560.4 483.15,589.3 483.66,538.7 484.16,551.9 484.67,559.0 485.17,583.9 485.68,543.6 486.18,553.9 486.69,554.8 487.19,556.6 487.70,587.4 488.20,557.8 488.71,553.7 489.21,556.4 489.71,551.3 490.22,574.5 490.72,556.7 491.23,550.1 491.73,558.8 492.24,596.2 492.74,554.8 493.25,553.2 493.75,535.0 494.26,557.6 494.76,574.4 495.27,558.2 495.77,558.1 496.28,558.3 496.78,547.3 497.29,570.6 497.79,556.2 498.30,552.3 498.80,554.1 499.31,549.2 499.81,576.6 500.32,553.6 500.82,548.0 501.33,560.3 501.83,553.5 502.33,590.8 502.84,546.6 503.34,550.2 503.85,545.6 504.35,591.7 504.86,554.4 505.36,557.0 505.87,556.8 506.37,543.3 506.88,595.7 507.38,545.8 507.89,541.6 508.39,541.2 508.90,541.3 509.40,586.6 509.91,545.1 510.41,541.7 510.92,538.6 511.42,531.7 511.93,531.3 512.43,561.4 512.94,539.0 513.44,532.2 513.94,530.9 514.45,526.1 514.95,573.2 515.46,511.0 515.96,508.8 516.47,513.3 516.97,515.4 517.48,570.8 517.98,521.6 518.49,525.2 518.99,520.0 519.50,552.4 520.00,518.5 520.51,526.1 521.01,517.8 521.52,522.0 522.02,543.4 522.53,520.7 523.03,518.6 523.54,521.5 524.04,521.3 524.55,517.0 525.05,566.1 525.56,515.7 526.06,520.2 526.56,521.9 527.07,519.3 527.57,552.6 528.08,515.6 528.58,516.7 529.09,523.5 529.59,583.0 530.10,514.6 530.60,523.7 531.11,519.9 531.61,517.2 532.12,522.2 532.62,554.1 533.13,522.1 533.63,521.5 534.14,520.3 534.64,521.9 535.15,523.6 535.65,583.3 536.16,513.2 536.66,522.9 537.17,526.9 537.67,527.8 538.18,568.6 538.68,513.3 539.18,523.9 539.69,526.8 540.19,571.6 540.70,524.4 541.20,525.5 541.71,532.0 542.21,526.1 542.72,582.9 543.22,524.1 543.73,532.0 544.23,533.1 544.74,575.8 545.24,541.9 545.75,532.8 546.25,531.0 546.76,529.7 547.26,572.6 547.77,541.1 548.27,538.7 548.78,527.5 549.28,520.2 549.79,557.6 550.29,532.7 550.79,537.8 551.30,536.8 551.80,539.4 552.31,537.4 552.81,579.8 553.32,533.6 553.82,537.6 554.33,536.4 554.83,536.0 555.34,577.7 555.84,535.2 556.35,536.4 556.85,539.9 557.36,532.4 557.86,531.4 558.37,582.1 558.87,520.1 559.38,510.5 559.88,505.3 560.39,508.4 560.89,577.3 561.40,528.4 561.90,533.2 562.41,536.7 562.91,532.1 563.41,572.5 563.92,537.9 564.42,538.1 564.93,532.0 565.43,569.7 565.94,535.5 566.44,539.7 566.95,547.1 567.45,528.3 567.96,571.0 568.46,540.2 568.97,543.4 569.47,538.7 569.98,538.4 570.48,584.1 570.99,540.4 571.49,536.1 572.00,544.2 572.50,539.9 573.01,540.2 573.51,578.4 574.02,543.7 574.52,543.9 575.03,545.3 575.53,572.5 576.03,548.0 576.54,546.5 577.04,543.5 577.55,542.7 578.05,579.4 578.56,543.5 579.06,543.1 579.57,537.2 580.07,543.8 580.58,585.1 581.08,540.1 581.59,538.7 582.09,534.1 582.60,537.3 583.10,532.3 583.61,574.8 584.11,533.9 584.62,538.7 585.12,536.1 585.63,571.7 586.13,533.9 586.64,539.5 587.14,536.7 587.65,544.7 588.15,583.6 588.65,541.0 589.16,540.9 589.66,523.0 590.17,548.3 590.67,571.9 591.18,547.6 591.68,540.6 592.19,539.3 592.69,537.9 593.20,545.8 593.70,580.3 594.21,539.7 594.71,550.1 595.22,544.1 595.72,543.3 596.23,586.9 596.73,545.6 597.24,546.1 597.74,543.1 598.25,544.9 598.75,588.8 599.26,533.0 599.76,527.4 600.26,518.7 600.77,522.8 601.27,576.7 601.78,535.1 602.28,542.6 602.79,537.1 603.29,547.0 603.80,559.2 604.30,546.3 604.81,546.6 605.31,541.7 605.82,544.6 606.32,566.3 606.83,553.6 607.33,555.0 607.84,554.7 608.34,553.8 608.85,584.5 609.35,551.1 609.86,543.8 610.36,551.3 610.87,539.6 611.37,586.5 611.88,543.3 612.38,549.8 612.88,546.8 613.39,547.7 613.89,551.4 614.40,581.6 614.90,539.4 615.41,541.5 615.91,543.8 616.42,547.3 616.92,546.5 617.43,581.2 617.93,545.2 618.44,537.3 618.94,547.7 619.45,585.4 619.95,542.3 620.46,545.6 620.96,546.8 621.47,542.6 621.97,562.4 622.48,534.5 622.98,541.4 623.49,543.3 623.99,522.2 624.50,545.1 625.00,580.1 625.50,543.9 626.01,545.0 626.51,543.0 627.02,539.5 627.52,535.3 628.03,574.9 628.53,542.8 629.04,538.0 629.54,547.0 630.05,536.8 630.55,540.9 631.06,581.5 631.56,536.2 632.07,541.9 632.57,545.7 633.08,545.3 633.58,536.7 634.09,578.5 634.59,539.0 635.10,542.7 635.60,537.8 636.11,532.4 636.61,573.9 637.11,533.7 637.62,534.6 638.12,533.3 638.63,540.2 639.13,580.3 639.64,539.2 640.14,536.7 640.65,547.1 641.15,544.7 641.66,578.1 642.16,545.3 642.67,535.1 643.17,549.6 643.68,551.2 644.18,582.7 644.69,551.2 645.19,542.9 645.70,550.7 646.20,544.8 646.71,540.7 647.21,573.1 647.72,544.3 648.22,543.0 648.73,530.6 649.23,558.7 649.73,544.1 650.24,545.9 650.74,543.7 651.25,544.6 651.75,585.8 652.26,552.1 652.76,541.3 653.27,550.1 653.77,544.3 654.28,566.6 654.78,553.6 655.29,550.3 655.79,548.1 656.30,561.4 656.80,541.7 657.31,535.4 657.81,538.2 658.32,574.0 658.82,537.6 659.33,542.5 659.83,546.9 660.34,548.9 660.84,588.5 661.35,546.8 661.85,539.3 662.35,544.1 662.86,538.9 663.36,537.5 663.87,586.9 664.37,547.8 664.88,547.2 665.38,538.8 665.89,546.4 666.39,548.5 666.90,564.5 667.40,548.8 667.91,545.4 668.41,543.3 668.92,588.6 669.42,540.9 669.93,540.8 670.43,547.0 670.94,547.9 671.44,575.7 671.95,541.8 672.45,544.5 672.96,548.8 673.46,539.6 673.96,536.2 674.47,580.1 674.97,545.3 675.48,544.0 675.98,538.7 676.49,548.4 676.99,544.8 677.50,579.9 678.00,541.6 678.51,544.8 679.01,543.2 679.52,546.8 680.02,544.3 680.53,588.2 681.03,544.8 681.54,540.9 682.04,535.5 682.55,579.6 683.05,522.0 683.56,520.7 684.06,525.5 684.57,582.6 685.07,537.9 685.58,538.7 686.08,539.9 686.58,547.8 687.09,537.4 687.59,579.5 688.10,545.7 688.60,541.1 689.11,550.1 689.61,550.0 690.12,573.9 690.62,548.4 691.13,547.9 691.63,537.6 692.14,545.0 692.64,571.2 693.15,536.5 693.65,531.1 694.16,527.7 694.66,530.2 695.17,581.4 695.67,537.5 696.18,537.8 696.68,534.7 697.19,524.6 697.69,525.3 698.20,566.5 698.70,525.3 699.20,527.6 699.71,522.8 700.21,509.1 700.72,507.6 701.22,544.2 701.73,503.7 702.23,509.9 702.74,516.7 703.24,518.7 703.75,553.2 704.25,519.0 704.76,528.1 705.26,524.1 705.77,526.8 706.27,521.5 706.78,567.2 707.28,530.7 707.79,523.6 708.29,523.8 708.80,530.3 709.30,534.0 709.81,580.9 710.31,525.9 710.82,527.3 711.32,526.3 711.82,526.7 712.33,570.9 712.83,520.3 713.34,515.1 713.84,513.2 714.35,550.8 714.85,518.9 715.36,519.7 715.86,522.4 716.37,525.8 716.87,566.9 717.38,516.2 717.88,517.7 718.39,529.9 718.89,522.3 719.40,573.2 719.90,519.4 720.41,522.2 720.91,526.7 721.42,524.9 721.92,573.7 722.43,526.8 722.93,521.9 723.43,521.9 723.94,583.4 724.44,524.2 724.95,513.1 725.45,517.7 725.96,580.9 726.46,522.1 726.97,525.1 727.47,512.5 727.98,524.8 728.48,552.9 728.99,528.9 729.49,521.8 730.00,527.8 730.50,553.4 731.01,526.7 731.51,527.0 732.02,528.2 732.52,517.7 733.03,520.8 733.53,570.5 734.04,519.6 734.54,513.4 735.05,515.0 735.55,518.4 736.05,579.4 736.56,518.8 737.06,516.9 737.57,516.4 738.07,521.1 738.58,528.2 739.08,573.4 739.59,525.3 740.09,531.7 740.60,532.1 741.10,533.5 741.61,522.7 742.11,580.0 742.62,530.2 743.12,524.7 743.63,532.4 744.13,527.3 744.64,585.3 745.14,533.1 745.65,528.8 746.15,539.0 746.66,526.6 747.16,585.7 747.67,536.2 748.17,543.8 748.67,534.5 749.18,575.9 749.68,537.7 750.19,544.3 750.69,537.0 751.20,582.7 751.70,540.8 752.21,536.8 752.71,545.4 753.22,542.4 753.72,530.2 754.23,575.8 754.73,545.4 755.24,542.0 755.74,542.7 756.25,549.3 756.75,583.9 757.26,549.8 757.76,550.7 758.27,554.7 758.77,546.8 759.28,547.0 759.78,589.8 760.28,549.5 760.79,547.1 761.29,552.8 761.80,592.2 762.30,545.5 762.81,548.0 763.31,547.2 763.82,549.5 764.32,592.2 764.83,539.2 765.33,547.4 765.84,544.6 766.34,546.1 766.85,595.1 767.35,540.6 767.86,546.8 768.36,542.5 768.87,541.1 769.37,539.4 769.88,582.5 770.38,546.0 770.89,544.6 771.39,548.0 771.90,560.0 772.40,590.0 772.4,633.4" fill="rgba(126,178,109,0.1)"/>
<polyline points="46.00,548.7 46.50,553.1 47.01,544.9 47.51,541.6 48.02,543.3 48.52,545.9 49.03,548.6 49.53,585.9 50.04,545.1 50.54,553.3 51.05,545.5 51.55,553.7 52.06,551.9 52.56,569.3 53.07,545.0 53.57,549.8 54.08,545.6 54.58,544.4 55.09,576.1 55.59,548.0 56.10,540.6 56.60,545.6 57.11,541.1 57.61,583.4 58.12,544.5 58.62,540.9 59.12,535.1 59.63,550.8 60.13,583.7 60.64,544.7 61.14,550.8 61.65,552.3 62.15,546.7 62.66,582.6 63.16,542.0 63.67,546.2 64.17,545.0 64.68,550.5 65.18,541.1 65.69,577.3 66.19,540.5 66.70,545.1 67.20,545.9 67.71,543.4 68.21,539.2 68.72,584.0 69.22,545.5 69.73,545.6 70.23,545.5 70.73,539.5 71.24,544.0 71.74,588.9 72.25,536.4 72.75,539.9 73.26,548.7 73.76,537.3 74.27,550.6 74.77,589.8 75.28,550.5 75.78,536.5 76.29,549.1 76.79,553.0 77.30,578.8 77.80,545.7 78.31,536.5 78.81,548.9 79.32,541.5 79.82,583.1 80.33,536.3 80.83,545.0 81.34,549.0 81.84,540.0 82.35,545.0 82.85,567.5 83.35,534.4 83.86,542.0 84.36,537.1 84.87,565.9 85.37,541.4 85.88,542.7 86.38,539.3 86.89,542.8 87.39,587.7 87.90,551.1 88.40,544.9 88.91,553.9 89.41,548.8 89.92,564.5 90.42,548.4 90.93,544.1 91.43,541.8 91.94,538.8 92.44,575.3 92.95,537.6 93.45,545.3 93.96,537.5 94.46,581.7 94.97,542.3 95.47,541.5 95.97,540.4 96.48,537.2 96.98,527.1 97.49,587.6 97.99,518.0 98.50,523.8 99.00,528.0 99.51,534.0 100.01,541.3 100.52,571.3 101.02,535.2 101.53,541.2 102.03,537.9 102.54,536.9 103.04,556.2 103.55,534.2 104.05,527.4 104.56,535.5 105.06,560.7 105.57,535.0 106.07,539.5 106.58,532.6 107.08,538.4 107.58,532.4 108.09,552.0 108.59,539.8 109.10,527.6 109.60,526.5 110.11,580.0 110.61,525.7 111.12,534.3 111.62,533.3 112.13,531.2 112.63,567.3 113.14,528.7 113.64,536.3 114.15,536.5 114.65,534.6 115.16,570.7 115.66,522.3 116.17,526.2 116.67,525.1 117.18,516.5 117.68,509.7 118.19,571.4 118.69,485.4 119.20,483.3 119.70,491.7 120.20,507.2 120.71,577.6 121.21,520.7 121.72,521.1 122.22,519.0 122.73,522.6 123.23,578.2 123.74,522.8 124.24,519.0 124.75,521.3 125.25,528.3 125.76,515.7 126.26,550.9 126.77,516.8 127.27,521.5 127.78,515.6 128.28,515.1 128.79,548.6 129.29,523.0 129.80,526.6 130.30,515.0 130.81,520.5 131.31,546.9 131.82,526.2 132.32,523.6 132.82,526.6 133.33,513.1 133.83,550.8 134.34,518.9 134.84,515.9 135.35,523.8 135.85,514.4 136.36,575.1 136.86,516.9 137.37,519.3 137.87,524.3 138.38,517.7 138.88,565.9 139.39,519.4 139.89,527.6 140.40,522.0 140.90,544.2 141.41,524.3 141.91,518.3 142.42,518.0 142.92,515.5 143.43,510.5 143.93,571.7 144.44,500.8 144.94,500.5 145.44,507.8 145.95,513.5 146.45,511.1 146.96,552.7 147.46,515.9 147.97,524.9 148.47,523.6 148.98,547.2 149.48,519.4 149.99,517.3 150.49,531.2 151.00,518.7 151.50,581.3 152.01,528.9 152.51,530.2 153.02,520.9 153.52,528.7 154.03,581.7 154.53,526.3 155.04,523.1 155.54,522.6 156.05,527.0 156.55,548.2 157.05,526.0 157.56,535.3 158.06,514.8 158.57,532.3 159.07,531.2 159.58,575.7 160.08,533.2 160.59,527.7 161.09,534.0 161.60,535.2 162.10,526.7 162.61,580.8 163.11,525.0 163.62,524.2 164.12,525.1 164.63,520.6 165.13,532.4 165.64,569.2 166.14,530.7 166.65,528.7 167.15,530.8 167.66,520.6 168.16,577.7 168.67,535.5 169.17,531.0 169.67,533.3 170.18,531.3 170.68,573.5 171.19,524.8 171.69,531.4 172.20,525.8 172.70,519.3 173.21,578.8 173.71,512.4 174.22,513.2 174.72,519.6 175.23,525.7 175.73,531.9 176.24,585.5 176.74,533.8 177.25,533.6 177.75,530.2 178.26,535.3 178.76,533.9 179.27,577.3 179.77,533.5 180.28,533.7 180.78,522.4 181.29,539.9 181.79,542.4 182.29,583.1 182.80,531.1 183.30,528.0 183.81,528.3 184.31,538.9 184.82,586.5 185.32,528.3 185.83,517.1 186.33,535.1 186.84,525.5 187.34,586.7 187.85,531.0 188.35,510.2 188.86,535.1 189.36,584.0 189.87,534.6 190.37,533.1 190.88,532.4 191.38,527.3 191.89,576.5 192.39,526.3 192.90,528.0 193.40,528.0 193.90,533.4 194.41,577.2 194.91,535.1 195.42,533.1 195.92,532.5 196.43,523.8 196.93,581.4 197.44,507.9 197.94,505.3 198.45,511.9 198.95,523.1 199.46,530.9 199.96,579.4 200.47,533.0 200.97,536.6 201.48,538.6 201.98,546.7 202.49,578.3 202.99,540.7 203.50,538.5 204.00,541.3 204.51,547.2 205.01,546.3 205.52,587.4 206.02,544.9 206.52,535.7 207.03,540.7 207.53,538.0 208.04,533.5 208.54,587.8 209.05,534.3 209.55,534.9 210.06,526.9 210.56,544.0 211.07,580.5 211.57,546.3 212.08,545.0 212.58,543.8 213.09,546.3 213.59,565.0 214.10,547.6 214.60,548.5 215.11,538.2 215.61,561.3 216.12,539.7 216.62,541.3 217.13,540.7 217.63,588.9 218.14,544.4 218.64,548.0 219.14,531.5 219.65,538.4 220.15,583.5 220.66,535.8 221.16,536.3 221.67,526.6 222.17,516.0 222.68,579.6 223.18,508.9 223.69,516.5 224.19,525.0 224.70,533.3 225.20,579.9 225.71,542.6 226.21,536.4 226.72,542.3 227.22,544.6 227.73,592.3 228.23,536.7 228.74,544.0 229.24,548.0 229.75,540.3 230.25,564.6 230.75,551.5 231.26,551.0 231.76,540.2 232.27,544.2 232.77,583.2 233.28,546.0 233.78,548.8 234.29,538.9 234.79,546.6 235.30,567.9 235.80,548.8 236.31,547.6 236.81,541.6 237.32,539.8 237.82,568.4 238.33,536.2 238.83,553.1 239.34,547.2 239.84,551.1 240.35,592.2 240.85,549.9 241.36,542.8 241.86,545.3 242.37,542.5 242.87,574.0 243.37,547.9 243.88,542.9 244.38,539.5 244.89,546.8 245.39,592.6 245.90,548.1 246.40,546.7 246.91,542.7 247.41,549.4 247.92,568.7 248.42,551.3 248.93,545.1 249.43,555.9 249.94,548.0 250.44,584.9 250.95,551.1 251.45,552.4 251.96,554.1 252.46,552.5 252.97,589.1 253.47,554.6 253.98,547.1 254.48,555.7 254.99,556.0 255.49,550.8 255.99,593.7 256.50,546.5 257.00,555.8 257.51,555.9 258.01,597.3 258.52,555.5 259.02,559.8 259.53,556.9 260.03,554.2 260.54,592.4 261.04,541.2 261.55,546.3 262.05,555.8 262.56,556.2 263.06,593.7 263.57,549.7 264.07,549.4 264.58,545.3 265.08,552.5 265.59,549.3 266.09,568.0 266.60,539.1 267.10,537.6 267.61,544.1 268.11,532.4 268.61,585.3 269.12,536.9 269.62,532.2 270.13,536.9 270.63,536.9 271.14,590.6 271.64,533.2 272.15,535.2 272.65,530.7 273.16,525.6 273.66,535.0 274.17,583.8 274.67,530.1 275.18,534.3 275.68,537.0 276.19,536.1 276.69,575.7 277.20,535.5 277.70,532.4 278.21,520.1 278.71,522.6 279.22,585.1 279.72,522.3 280.22,521.2 280.73,511.3 281.23,500.7 281.74,582.4 282.24,490.9 282.75,496.2 283.25,509.4 283.76,521.7 284.26,518.2 284.77,575.9 285.27,505.4 285.78,519.7 286.28,520.3 286.79,509.7 287.29,523.9 287.80,570.9 288.30,526.2 288.81,518.4 289.31,523.0 289.82,522.6 290.32,581.6 290.83,526.4 291.33,521.5 291.84,517.5 292.34,523.8 292.84,548.8 293.35,512.5 293.85,521.4 294.36,520.4 294.86,581.5 295.37,519.6 295.87,518.6 296.38,504.7 296.88,519.7 297.39,521.9 297.89,573.8 298.40,520.5 298.90,523.2 299.41,526.2 299.91,523.3 300.42,515.5 300.92,572.4 301.43,519.5 301.93,515.2 302.44,524.9 302.94,512.7 303.45,514.4 303.95,583.9 304.46,514.6 304.96,513.2 305.46,514.6 305.97,526.0 306.47,550.6 306.98,524.2 307.48,522.9 307.99,522.0 308.49,522.3 309.00,523.8 309.50,550.1 310.01,516.4 310.51,521.7 311.02,523.6 311.52,521.8 312.03,587.4 312.53,523.8 313.04,524.4 313.54,524.9 314.05,532.0 314.55,527.7 315.06,548.4 315.56,525.0 316.07,520.5 316.57,528.2 317.07,532.7 317.58,573.2 318.08,534.7 318.59,523.6 319.09,530.0 319.60,528.2 320.10,549.5 320.61,533.0 321.11,525.6 321.62,521.5 322.12,536.2 322.63,551.8 323.13,533.8 323.64,529.0 324.14,529.2 324.65,527.5 325.15,574.7 325.66,523.9 326.16,520.7 326.67,513.7 327.17,512.3 327.68,507.7 328.18,549.9 328.69,516.7 329.19,524.7 329.69,526.0 330.20,523.8 330.70,526.8 331.21,577.6 331.71,535.9 332.22,535.5 332.72,539.9 333.23,537.2 333.73,585.3 334.24,535.4 334.74,529.8 335.25,536.0 335.75,526.7 336.26,576.3 336.76,525.8 337.27,527.1 337.77,524.9 338.28,523.9 338.78,587.0 339.29,530.2 339.79,529.3 340.30,525.8 340.80,524.5 341.31,575.1 341.81,522.6 342.31,531.7 342.82,524.6 343.32,528.0 343.83,555.0 344.33,532.9 344.84,512.0 345.34,536.3 345.85,533.0 346.35,585.5 346.86,531.6 347.36,525.7 347.87,522.9 348.37,526.9 348.88,535.0 349.38,591.3 349.89,536.1 350.39,534.8 350.90,532.8 351.40,533.6 351.91,540.0 352.41,588.5 352.92,528.1 353.42,527.8 353.92,528.4 354.43,535.0 354.93,582.3 355.44,529.6 355.94,527.8 356.45,523.7 356.95,516.2 357.46,512.2 357.96,581.7 358.47,518.3 358.97,523.6 359.48,530.7 359.98,529.0 360.49,584.6 360.99,534.0 361.50,531.1 362.00,531.9 362.51,536.9 363.01,578.4 363.52,528.8 364.02,539.7 364.53,520.9 365.03,537.4 365.54,532.2 366.04,578.2 366.54,532.1 367.05,533.8 367.55,543.7 368.06,540.1 368.56,543.0 369.07,576.2 369.57,537.6 370.08,542.4 370.58,540.5 371.09,544.8 371.59,593.2 372.10,542.5 372.60,534.5 373.11,542.4 373.61,533.4 374.12,576.4 374.62,533.7 375.13,545.9 375.63,540.3 376.14,535.6 376.64,584.6 377.15,541.5 377.65,533.9 378.16,539.9 378.66,529.5 379.16,582.0 379.67,535.9 380.17,534.4 380.68,531.1 381.18,524.5 381.69,583.6 382.19,527.7 382.70,530.1 383.20,536.2 383.71,538.8 384.21,582.0 384.72,535.3 385.22,538.8 385.73,537.3 386.23,535.9 386.74,593.3 387.24,542.9 387.75,536.6 388.25,535.2 388.76,545.3 389.26,586.7 389.77,537.3 390.27,541.6 390.77,548.0 391.28,594.3 391.78,540.4 392.29,540.0 392.79,540.0 393.30,593.4 393.80,540.5 394.31,541.6 394.81,542.0 395.32,547.2 395.82,578.0 396.33,546.9 396.83,544.0 397.34,547.7 397.84,592.1 398.35,535.4 398.85,540.0 399.36,547.7 399.86,547.0 400.37,569.0 400.87,544.2 401.38,548.5 401.88,546.9 402.39,547.6 402.89,548.0 403.39,592.3 403.90,540.9 404.40,545.9 404.91,545.2 405.41,550.1 405.92,591.2 406.42,550.9 406.93,545.1 407.43,553.2 407.94,549.8 408.44,579.4 408.95,549.0 409.45,547.0 409.96,542.3 410.46,542.9 410.97,563.7 411.47,542.5 411.98,531.3 412.48,527.0 412.99,521.0 413.49,526.5 414.00,577.9 414.50,540.8 415.01,546.6 415.51,549.5 416.01,546.5 416.52,582.6 417.02,544.1 417.53,549.4 418.03,551.5 418.54,556.0 419.04,593.0 419.55,543.9 420.05,545.0 420.56,542.1 421.06,547.4 421.57,532.5 422.07,568.5 422.58,543.8 423.08,555.9 423.59,546.9 424.09,543.7 424.60,570.0 425.10,556.3 425.61,550.7 426.11,546.3 426.62,555.5 427.12,594.1 427.63,548.6 428.13,553.8 428.63,549.7 429.14,554.9 429.64,568.8 430.15,550.4 430.65,547.5 431.16,550.5 431.66,555.1 432.17,546.9 432.67,592.6 433.18,544.2 433.68,551.2 434.19,549.6 434.69,550.3 435.20,579.0 435.70,549.8 436.21,546.6 436.71,541.5 437.22,538.5 437.72,533.0 438.23,586.0 438.73,536.4 439.24,543.7 439.74,547.4 440.24,549.4 440.75,549.9 441.25,582.9 441.76,553.2 442.26,558.6 442.77,556.3 443.27,553.4 443.78,558.4 444.28,566.6 444.79,562.9 445.29,561.0 445.80,557.8 446.30,554.7 446.81,557.6 447.31,566.3 447.82,556.2 448.32,557.2 448.83,547.0 449.33,587.6 449.84,541.8 450.34,549.0 450.85,545.9 451.35,554.2 451.86,544.5 452.36,571.6 452.86,544.2 453.37,543.7 453.87,550.0 454.38,555.3 454.88,554.4 455.39,595.6 455.89,559.3 456.40,553.0 456.90,547.1 457.41,592.9 457.91,555.4 458.42,550.0 458.92,557.9 459.43,546.2 459.93,583.9 460.44,560.8 460.94,545.7 461.45,545.1 461.95,552.1 462.46,556.5 462.96,590.7 463.47,557.3 463.97,545.1 464.48,546.3 464.98,552.3 465.48,594.7 465.99,549.4 466.49,546.8 467.00,553.2 467.50,552.6 468.01,592.7 468.51,550.9 469.02,555.1 469.52,553.7 470.03,556.9 470.53,587.9 471.04,558.0 471.54,547.7 472.05,545.2 472.55,591.2 473.06,551.3 473.56,547.9 474.07,558.0 474.57,545.4 475.08,591.9 475.58,554.3 476.09,552.5 476.59,553.0 477.09,548.2 477.60,554.4 478.10,573.6 478.61,557.4 479.11,547.3 479.62,560.1 480.12,574.0 480.63,557.0 481.13,561.5 481.64,548.7 482.14,554.8 482.65,560.4 483.15,589.3 483.66,538.7 484.16,551.9 484.67,559.0 485.17,583.9 485.68,543.6 486.18,553.9 486.69,554.8 487.19,556.6 487.70,587.4 488.20,557.8 488.71,553.7 489.21,556.4 489.71,551.3 490.22,574.5 490.72,556.7 491.23,550.1 491.73,558.8 492.24,596.2 492.74,554.8 493.25,553.2 493.75,535.0 494.26,557.6 494.76,574.4 495.27,558.2 495.77,558.1 496.28,558.3 496.78,547.3 497.29,570.6 497.79,556.2 498.30,552.3 498.80,554.1 499.31,549.2 499.81,576.6 500.32,553.6 500.82,548.0 501.33,560.3 501.83,553.5 502.33,590.8 502.84,546.6 503.34,550.2 503.85,545.6 504.35,591.7 504.86,554.4 505.36,557.0 505.87,556.8 506.37,543.3 506.88,595.7 507.38,545.8 507.89,541.6 508.39,541.2 508.90,541.3 509.40,586.6 509.91,545.1 510.41,541.7 510.92,538.6 511.42,531.7 511.93,531.3 512.43,561.4 512.94,539.0 513.44,532.2 513.94,530.9 514.45,526.1 514.95,573.2 515.46,511.0 515.96,508.8 516.47,513.3 516.97,515.4 517.48,570.8 517.98,521.6 518.49,525.2 518.99,520.0 519.50,552.4 520.00,518.5 520.51,526.1 521.01,517.8 521.52,522.0 522.02,543.4 522.53,520.7 523.03,518.6 523.54,521.5 524.04,521.3 524.55,517.0 525.05,566.1 525.56,515.7 526.06,520.2 526.56,521.9 527.07,519.3 527.57,552.6 528.08,515.6 528.58,516.7 529.09,523.5 529.59,583.0 530.10,514.6 530.60,523.7 531.11,519.9 531.61,517.2 532.12,522.2 532.62,554.1 533.13,522.1 533.63,521.5 534.14,520.3 534.64,521.9 535.15,523.6 535.65,583.3 536.16,513.2 536.66,522.9 537.17,526.9 537.67,527.8 538.18,568.6 538.68,513.3 539.18,523.9 539.69,526.8 540.19,571.6 540.70,524.4 541.20,525.5 541.71,532.0 542.21,526.1 542.72,582.9 543.22,524.1 543.73,532.0 544.23,533.1 544.74,575.8 545.24,541.9 545.75,532.8 546.25,531.0 546.76,529.7 547.26,572.6 547.77,541.1 548.27,538.7 548.78,527.5 549.28,520.2 549.79,557.6 550.29,532.7 550.79,537.8 551.30,536.8 551.80,539.4 552.31,537.4 552.81,579.8 553.32,533.6 553.82,537.6 554.33,536.4 554.83,536.0 555.34,577.7 555.84,535.2 556.35,536.4 556.85,539.9 557.36,532.4 557.86,531.4 558.37,582.1 558.87,520.1 559.38,510.5 559.88,505.3 560.39,508.4 560.89,577.3 561.40,528.4 561.90,533.2 562.41,536.7 562.91,532.1 563.41,572.5 563.92,537.9 564.42,538.1 564.93,532.0 565.43,569.7 565.94,535.5 566.44,539.7 566.95,547.1 567.45,528.3 567.96,571.0 568.46,540.2 568.97,543.4 569.47,538.7 569.98,538.4 570.48,584.1 570.99,540.4 571.49,536.1 572.00,544.2 572.50,539.9 573.01,540.2 573.51,578.4 574.02,543.7 574.52,543.9 575.03,545.3 575.53,572.5 576.03,548.0 576.54,546.5 577.04,543.5 577.55,542.7 578.05,579.4 578.56,543.5 579.06,543.1 579.57,537.2 580.07,543.8 580.58,585.1 581.08,540.1 581.59,538.7 582.09,534.1 582.60,537.3 583.10,532.3 583.61,574.8 584.11,533.9 584.62,538.7 585.12,536.1 585.63,571.7 586.13,533.9 586.64,539.5 587.14,536.7 587.65,544.7 588.15,583.6 588.65,541.0 589.16,540.9 589.66,523.0 590.17,548.3 590.67,571.9 591.18,547.6 591.68,540.6 592.19,539.3 592.69,537.9 593.20,545.8 593.70,580.3 594.21,539.7 594.71,550.1 595.22,544.1 595.72,543.3 596.23,586.9 596.73,545.6 597.24,546.1 597.74,543.1 598.25,544.9 598.75,588.8 599.26,533.0 599.76,527.4 600.26,518.7 600.77,522.8 601.27,576.7 601.78,535.1 602.28,542.6 602.79,537.1 603.29,547.0 603.80,559.2 604.30,546.3 604.81,546.6 605.31,541.7 605.82,544.6 606.32,566.3 606.83,553.6 607.33,555.0 607.84,554.7 608.34,553.8 608.85,584.5 609.35,551.1 609.86,543.8 610.36,551.3 610.87,539.6 611.37,586.5 611.88,543.3 612.38,549.8 612.88,546.8 613.39,547.7 613.89,551.4 614.40,581.6 614.90,539.4 615.41,541.5 615.91,543.8 616.42,547.3 616.92,546.5 617.43,581.2 617.93,545.2 618.44,537.3 618.94,547.7 619.45,585.4 619.95,542.3 620.46,545.6 620.96,546.8 621.47,542.6 621.97,562.4 622.48,534.5 622.98,541.4 623.49,543.3 623.99,522.2 624.50,545.1 625.00,580.1 625.50,543.9 626.01,545.0 626.51,543.0 627.02,539.5 627.52,535.3 628.03,574.9 628.53,542.8 629.04,538.0 629.54,547.0 630.05,536.8 630.55,540.9 631.06,581.5 631.56,536.2 632.07,541.9 632.57,545.7 633.08,545.3 633.58,536.7 634.09,578.5 634.59,539.0 635.10,542.7 635.60,537.8 636.11,532.4 636.61,573.9 637.11,533.7 637.62,534.6 638.12,533.3 638.63,540.2 639.13,580.3 639.64,539.2 640.14,536.7 640.65,547.1 641.15,544.7 641.66,578.1 642.16,545.3 642.67,535.1 643.17,549.6 643.68,551.2 644.18,582.7 644.69,551.2 645.19,542.9 645.70,550.7 646.20,544.8 646.71,540.7 647.21,573.1 647.72,544.3 648.22,543.0 648.73,530.6 649.23,558.7 649.73,544.1 650.24,545.9 650.74,543.7 651.25,544.6 651.75,585.8 652.26,552.1 652.76,541.3 653.27,550.1 653.77,544.3 654.28,566.6 654.78,553.6 655.29,550.3 655.79,548.1 656.30,561.4 656.80,541.7 657.31,535.4 657.81,538.2 658.32,574.0 658.82,537.6 659.33,542.5 659.83,546.9 660.34,548.9 660.84,588.5 661.35,546.8 661.85,539.3 662.35,544.1 662.86,538.9 663.36,537.5 663.87,586.9 664.37,547.8 664.88,547.2 665.38,538.8 665.89,546.4 666.39,548.5 666.90,564.5 667.40,548.8 667.91,545.4 668.41,543.3 668.92,588.6 669.42,540.9 669.93,540.8 670.43,547.0 670.94,547.9 671.44,575.7 671.95,541.8 672.45,544.5 672.96,548.8 673.46,539.6 673.96,536.2 674.47,580.1 674.97,545.3 675.48,544.0 675.98,538.7 676.49,548.4 676.99,544.8 677.50,579.9 678.00,541.6 678.51,544.8 679.01,543.2 679.52,546.8 680.02,544.3 680.53,588.2 681.03,544.8 681.54,540.9 682.04,535.5 682.55,579.6 683.05,522.0 683.56,520.7 684.06,525.5 684.57,582.6 685.07,537.9 685.58,538.7 686.08,539.9 686.58,547.8 687.09,537.4 687.59,579.5 688.10,545.7 688.60,541.1 689.11,550.1 689.61,550.0 690.12,573.9 690.62,548.4 691.13,547.9 691.63,537.6 692.14,545.0 692.64,571.2 693.15,536.5 693.65,531.1 694.16,527.7 694.66,530.2 695.17,581.4 695.67,537.5 696.18,537.8 696.68,534.7 697.19,524.6 697.69,525.3 698.20,566.5 698.70,525.3 699.20,527.6 699.71,522.8 700.21,509.1 700.72,507.6 701.22,544.2 701.73,503.7 702.23,509.9 702.74,516.7 703.24,518.7 703.75,553.2 704.25,519.0 704.76,528.1 705.26,524.1 705.77,526.8 706.27,521.5 706.78,567.2 707.28,530.7 707.79,523.6 708.29,523.8 708.80,530.3 709.30,534.0 709.81,580.9 710.31,525.9 710.82,527.3 711.32,526.3 711.82,526.7 712.33,570.9 712.83,520.3 713.34,515.1 713.84,513.2 714.35,550.8 714.85,518.9 715.36,519.7 715.86,522.4 716.37,525.8 716.87,566.9 717.38,516.2 717.88,517.7 718.39,529.9 718.89,522.3 719.40,573.2 719.90,519.4 720.41,522.2 720.91,526.7 721.42,524.9 721.92,573.7 722.43,526.8 722.93,521.9 723.43,521.9 723.94,583.4 724.44,524.2 724.95,513.1 725.45,517.7 725.96,580.9 726.46,522.1 726.97,525.1 727.47,512.5 727.98,524.8 728.48,552.9 728.99,528.9 729.49,521.8 730.00,527.8 730.50,553.4 731.01,526.7 731.51,527.0 732.02,528.2 732.52,517.7 733.03,520.8 733.53,570.5 734.04,519.6 734.54,513.4 735.05,515.0 735.55,518.4 736.05,579.4 736.56,518.8 737.06,516.9 737.57,516.4 738.07,521.1 738.58,528.2 739.08,573.4 739.59,525.3 740.09,531.7 740.60,532.1 741.10,533.5 741.61,522.7 742.11,580.0 742.62,530.2 743.12,524.7 743.63,532.4 744.13,527.3 744.64,585.3 745.14,533.1 745.65,528.8 746.15,539.0 746.66,526.6 747.16,585.7 747.67,536.2 748.17,543.8 748.67,534.5 749.18,575.9 749.68,537.7 750.19,544.3 750.69,537.0 751.20,582.7 751.70,540.8 752.21,536.8 752.71,545.4 753.22,542.4 753.72,530.2 754.23,575.8 754.73,545.4 755.24,542.0 755.74,542.7 756.25,549.3 756.75,583.9 757.26,549.8 757.76,550.7 758.27,554.7 758.77,546.8 759.28,547.0 759.78,589.8 760.28,549.5 760.79,547.1 761.29,552.8 761.80,592.2 762.30,545.5 762.81,548.0 763.31,547.2 763.82,549.5 764.32,592.2 764.83,539.2 765.33,547.4 765.84,544.6 766.34,546.1 766.85,595.1 767.35,540.6 767.86,546.8 768.36,542.5 768.87,541.1 769.37,539.4 769.88,582.5 770.38,546.0 770.89,544.6 771.39,548.0 771.90,560.0 772.40,590.0" fill="none" stroke="#76ae64" stroke-width="1"/>
<rect x="22" y="665.8" width="10.6" height="2.7" rx="1" fill="#7eb26d"/>
<rect x="782.3" y="660" width="5.7" height="15.7" rx="2.8" fill="#c7d0d9"/>
<path d="M788.0 680.2 H792.4 V675.9" fill="none" stroke="#9199a1" stroke-width="1.6"/>
<line x1="845.9" y1="444.50" x2="1577.3" y2="444.50" stroke="#e7e8ea" stroke-width="1"/>
<line x1="845.9" y1="482.50" x2="1577.3" y2="482.50" stroke="#e7e8ea" stroke-width="1"/>
<line x1="845.9" y1="520.50" x2="1577.3" y2="520.50" stroke="#e7e8ea" stroke-width="1"/>
<line x1="845.9" y1="558.50" x2="1577.3" y2="558.50" stroke="#e7e8ea" stroke-width="1"/>
<line x1="845.9" y1="595.50" x2="1577.3" y2="595.50" stroke="#e7e8ea" stroke-width="1"/>
<line x1="845.9" y1="633.50" x2="1577.3" y2="633.50" stroke="#e7e8ea" stroke-width="1"/>
<line x1="902.50" y1="444.3" x2="902.50" y2="633.4" stroke="#e7e8ea" stroke-width="1"/>
<line x1="1007.50" y1="444.3" x2="1007.50" y2="633.4" stroke="#e7e8ea" stroke-width="1"/>
<line x1="1112.50" y1="444.3" x2="1112.50" y2="633.4" stroke="#e7e8ea" stroke-width="1"/>
<line x1="1217.50" y1="444.3" x2="1217.50" y2="633.4" stroke="#e7e8ea" stroke-width="1"/>
<line x1="1322.50" y1="444.3" x2="1322.50" y2="633.4" stroke="#e7e8ea" stroke-width="1"/>
<line x1="1426.50" y1="444.3" x2="1426.50" y2="633.4" stroke="#e7e8ea" stroke-width="1"/>
<line x1="1531.50" y1="444.3" x2="1531.50" y2="633.4" stroke="#e7e8ea" stroke-width="1"/>
<rect x="854.60" y="476" width="34.4" height="157.40" fill="#7eb26d"/>
<rect x="907.02" y="476.9" width="34.4" height="156.50" fill="#7eb26d"/>
<rect x="959.44" y="471" width="34.4" height="162.40" fill="#7eb26d"/>
<rect x="1011.86" y="531.3" width="34.4" height="102.10" fill="#7eb26d"/>
<rect x="1064.28" y="525" width="34.4" height="108.40" fill="#7eb26d"/>
<rect x="1116.70" y="530.8" width="34.4" height="102.60" fill="#7eb26d"/>
<rect x="1169.12" y="525" width="34.4" height="108.40" fill="#7eb26d"/>
<rect x="1221.54" y="524.6" width="34.4" height="108.80" fill="#7eb26d"/>
<rect x="1273.96" y="528.7" width="34.4" height="104.70" fill="#7eb26d"/>
<rect x="1326.38" y="526.4" width="34.4" height="107.00" fill="#7eb26d"/>
<rect x="1378.80" y="535.1" width="34.4" height="98.30" fill="#7eb26d"/>
<rect x="1431.22" y="531.9" width="34.4" height="101.50" fill="#7eb26d"/>
<rect x="1483.64" y="531.9" width="34.4" height="101.50" fill="#7eb26d"/>
<rect x="1536.06" y="522.3" width="34.4" height="111.10" fill="#7eb26d"/>
<rect x="822" y="665.8" width="10.6" height="2.7" rx="1" fill="#7eb26d"/>
<rect x="1582.5" y="660" width="5.7" height="15.7" rx="2.8" fill="#c7d0d9"/>
<path d="M1588.2 680.2 H1592.8 V675.9" fill="none" stroke="#9199a1" stroke-width="1.6"/>
</svg>
<div class="t" style="left:-959.00px;width:1000px;text-align:right;top:439.00px;font-size:10.3px;color:#52545c;font-weight:normal;transform:scaleX(0.9);transform-origin:right center;">12.5 K</div>
<div class="t" style="left:-959.00px;width:1000px;text-align:right;top:477.00px;font-size:10.3px;color:#52545c;font-weight:normal;transform:scaleX(0.9);transform-origin:right center;">10.0 K</div>
<div class="t" style="left:-959.00px;width:1000px;text-align:right;top:515.00px;font-size:10.3px;color:#52545c;font-weight:normal;transform:scaleX(0.9);transform-origin:right center;">7.5 K</div>
<div class="t" style="left:-959.00px;width:1000px;text-align:right;top:553.00px;font-size:10.3px;color:#52545c;font-weight:normal;transform:scaleX(0.9);transform-origin:right center;">5.0 K</div>
<div class="t" style="left:-959.00px;width:1000px;text-align:right;top:591.00px;font-size:10.3px;color:#52545c;font-weight:normal;transform:scaleX(0.9);transform-origin:right center;">2.5 K</div>
<div class="t" style="left:-959.00px;width:1000px;text-align:right;top:629.00px;font-size:10.3px;color:#52545c;font-weight:normal;transform:scaleX(0.9);transform-origin:right center;">0</div>
<div class="t" style="left:-395.50px;width:1000px;text-align:center;top:641.00px;font-size:10.3px;color:#52545c;font-weight:normal;transform:scaleX(0.9);transform-origin:center center;">12:00</div>
<div class="t" style="left:-334.80px;width:1000px;text-align:center;top:641.00px;font-size:10.3px;color:#52545c;font-weight:normal;transform:scaleX(0.9);transform-origin:center center;">14:00</div>
<div class="t" style="left:-274.10px;width:1000px;text-align:center;top:641.00px;font-size:10.3px;color:#52545c;font-weight:normal;transform:scaleX(0.9);transform-origin:center center;">16:00</div>
<div class="t" style="left:-213.40px;width:1000px;text-align:center;top:641.00px;font-size:10.3px;color:#52545c;font-weight:normal;transform:scaleX(0.9);transform-origin:center center;">18:00</div>
<div class="t" style="left:-152.70px;width:1000px;text-align:center;top:641.00px;font-size:10.3px;color:#52545c;font-weight:normal;transform:scaleX(0.9);transform-origin:center center;">20:00</div>
<div class="t" style="left:-92.00px;width:1000px;text-align:center;top:641.00px;font-size:10.3px;color:#52545c;font-weight:normal;transform:scaleX(0.9);transform-origin:center center;">22:00</div>
<div class="t" style="left:-31.30px;width:1000px;text-align:center;top:641.00px;font-size:10.3px;color:#52545c;font-weight:normal;transform:scaleX(0.9);transform-origin:center center;">00:00</div>
<div class="t" style="left:29.40px;width:1000px;text-align:center;top:641.00px;font-size:10.3px;color:#52545c;font-weight:normal;transform:scaleX(0.9);transform-origin:center center;">02:00</div>
<div class="t" style="left:90.10px;width:1000px;text-align:center;top:641.00px;font-size:10.3px;color:#52545c;font-weight:normal;transform:scaleX(0.9);transform-origin:center center;">04:00</div>
<div class="t" style="left:150.80px;width:1000px;text-align:center;top:641.00px;font-size:10.3px;color:#52545c;font-weight:normal;transform:scaleX(0.9);transform-origin:center center;">06:00</div>
<div class="t" style="left:211.50px;width:1000px;text-align:center;top:641.00px;font-size:10.3px;color:#52545c;font-weight:normal;transform:scaleX(0.9);transform-origin:center center;">08:00</div>
<div class="t" style="left:272.20px;width:1000px;text-align:center;top:641.00px;font-size:10.3px;color:#52545c;font-weight:normal;transform:scaleX(0.9);transform-origin:center center;">10:00</div>
<div class="t" style="left:36.70px;top:662.00px;font-size:9.5px;color:#464c54;font-weight:normal;">DNS queries</div>
<div class="t" style="left:700.00px;width:1000px;text-align:center;top:411.00px;font-size:11.4px;color:#1e2030;font-weight:normal;">DNS Queries / day</div>
<svg class="abs" style="left:1453.30px;top:410.20px" width="12" height="12" viewBox="0 0 12 12">
<circle cx="6" cy="6" r="3.40" fill="none" stroke="#0a78b5" stroke-width="1.3"/>
<path d="M6 3.6 V6.3 H4.3" fill="none" stroke="#0a78b5" stroke-width="1.1"/>
</svg>
<div class="t" style="left:588.00px;width:1000px;text-align:right;top:412.00px;font-size:10.15px;color:#0a78b5;font-weight:normal;-webkit-text-stroke:0.25px #0a78b5;">Last 14 days timeshift -12h</div>
<div class="t" style="left:-159.50px;width:1000px;text-align:right;top:439.00px;font-size:10.3px;color:#52545c;font-weight:normal;transform:scaleX(0.9);transform-origin:right center;">12 Mil</div>
<div class="t" style="left:-159.50px;width:1000px;text-align:right;top:477.00px;font-size:10.3px;color:#52545c;font-weight:normal;transform:scaleX(0.9);transform-origin:right center;">10 Mil</div>
<div class="t" style="left:-159.50px;width:1000px;text-align:right;top:515.00px;font-size:10.3px;color:#52545c;font-weight:normal;transform:scaleX(0.9);transform-origin:right center;">8 Mil</div>
<div class="t" style="left:-159.50px;width:1000px;text-align:right;top:553.00px;font-size:10.3px;color:#52545c;font-weight:normal;transform:scaleX(0.9);transform-origin:right center;">6 Mil</div>
<div class="t" style="left:-159.50px;width:1000px;text-align:right;top:591.00px;font-size:10.3px;color:#52545c;font-weight:normal;transform:scaleX(0.9);transform-origin:right center;">4 Mil</div>
<div class="t" style="left:-159.50px;width:1000px;text-align:right;top:629.00px;font-size:10.3px;color:#52545c;font-weight:normal;transform:scaleX(0.9);transform-origin:right center;">2 Mil</div>
<div class="t" style="left:402.60px;width:1000px;text-align:center;top:641.00px;font-size:10.3px;color:#52545c;font-weight:normal;">3/25</div>
<div class="t" style="left:507.42px;width:1000px;text-align:center;top:641.00px;font-size:10.3px;color:#52545c;font-weight:normal;">3/27</div>
<div class="t" style="left:612.24px;width:1000px;text-align:center;top:641.00px;font-size:10.3px;color:#52545c;font-weight:normal;">3/29</div>
<div class="t" style="left:717.06px;width:1000px;text-align:center;top:641.00px;font-size:10.3px;color:#52545c;font-weight:normal;">3/31</div>
<div class="t" style="left:821.88px;width:1000px;text-align:center;top:641.00px;font-size:10.3px;color:#52545c;font-weight:normal;">4/2</div>
<div class="t" style="left:926.70px;width:1000px;text-align:center;top:641.00px;font-size:10.3px;color:#52545c;font-weight:normal;">4/4</div>
<div class="t" style="left:1031.52px;width:1000px;text-align:center;top:641.00px;font-size:10.3px;color:#52545c;font-weight:normal;">4/6</div>
<div class="t" style="left:836.80px;top:662.00px;font-size:9.5px;color:#464c54;font-weight:normal;">DNS queries</div>
</body></html>
